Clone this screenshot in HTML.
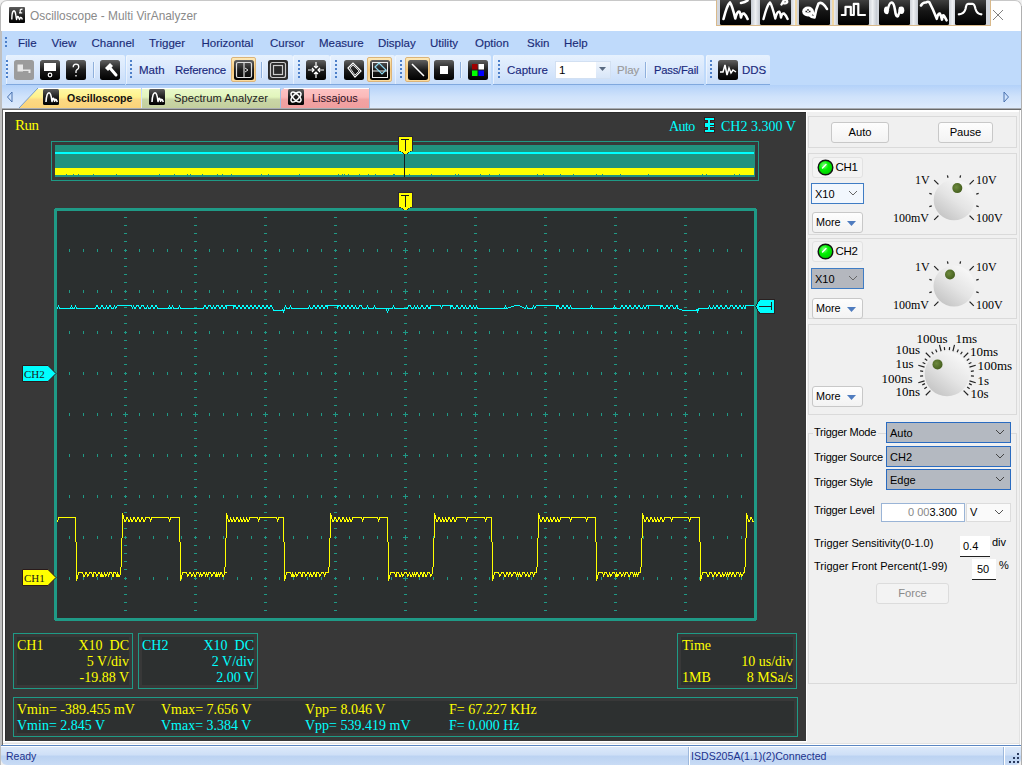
<!DOCTYPE html>
<html><head><meta charset="utf-8">
<style>
*{box-sizing:border-box;margin:0;padding:0}
html,body{width:1022px;height:765px;overflow:hidden;background:#f0f0f0;font-family:"Liberation Sans",sans-serif;position:relative}
.a{position:absolute;white-space:nowrap}
.sf{font-family:"Liberation Serif",serif}
.mi{position:absolute;top:36px;font-size:11.5px;line-height:14px;color:#1a2c78;white-space:nowrap;-webkit-text-stroke:0.15px #1a2c78}
.tg{position:absolute;top:55px;height:30px;background:linear-gradient(#e6f1fe,#d9e8fc 50%,#c8ddf9);border-bottom:1px solid #80a8de;border-radius:2px 2px 0 0;box-shadow:inset 1px 0 0 rgba(255,255,255,0.5)}
.grip{position:absolute;width:3px;background:repeating-linear-gradient(#4d7fc8 0 2px,transparent 2px 4px);-webkit-mask:linear-gradient(90deg,#000 0 2px,transparent 2px)}
.ico{position:absolute;width:20px;height:20px;border-radius:3px;background:linear-gradient(#5a5a5a,#101010 45%,#000)}
.gb{position:absolute;border:1px solid #dadada}
.btn{position:absolute;background:linear-gradient(#fdfdfd,#f3f3f3);border:1px solid #c8c8c8;border-radius:3px;font-size:11.2px;color:#000;text-align:center;white-space:nowrap}
.lab{position:absolute;font-size:11px;line-height:13px;color:#000;white-space:nowrap}
.kl{position:absolute;font-family:"Liberation Serif",serif;font-size:12px;line-height:12px;color:#000;white-space:nowrap}
.cmb{position:absolute;border:1px solid #2a6bc0;background:#b9bec6;font-size:11px;color:#000;white-space:nowrap}
.chev{position:absolute;width:6px;height:6px;border-right:1px solid #555;border-bottom:1px solid #555;transform:rotate(45deg)}
.ttxt{position:absolute;font-size:12px;line-height:14px;white-space:nowrap}
</style></head><body>

<div class="a" style="left:0;top:0;width:1022px;height:31px;background:#fff;border-top-left-radius:7px;border-top-right-radius:7px;border-left:1px solid #b8b8b8;border-top:1px solid #c8c8c8;border-right:1px solid #c8c8c8"></div>
<svg class="a" style="left:9px;top:7px" width="16" height="16" viewBox="0 0 16 16"><defs><linearGradient id="wic" x1="0" y1="0" x2="0" y2="1"><stop offset="0" stop-color="#5c5c5c"/><stop offset="0.55" stop-color="#202020"/><stop offset="1" stop-color="#000"/></linearGradient></defs><rect x="0" y="0" width="16" height="16" rx="1" fill="url(#wic)"/><path d="M2.8 12.5 L3 8 Q3.5 4 5 3.8 Q6.3 4 6.8 8 L7.5 12.5 L8.5 9.5 Q9.5 9 10 11.5 L10.5 12.5 L11.5 10.5 Q12.5 10 13.3 12.5" stroke="#fff" stroke-width="1.4" fill="none" stroke-linejoin="round"/><path d="M10 5.8 H13.2 M11.2 5.5 V3 Q11.5 2.2 13.5 2.2" stroke="#fff" stroke-width="1.2" fill="none"/></svg>
<div class="a" style="left:30px;top:9px;font-size:11.9px;line-height:15px;color:#8a8a8a">Oscilloscope - Multi VirAnalyzer</div>
<div class="a" style="left:716px;top:0;width:275px;height:26px;background:#d2d6dd;border:1px solid #d9b98a;border-top:none"></div>
<div class="a" style="left:751px;top:0;width:9px;height:25px;background:linear-gradient(90deg,#c4c9d1,#eef0f3 50%,#c4c9d1)"></div>
<div class="a" style="left:790px;top:0;width:9px;height:25px;background:linear-gradient(90deg,#c4c9d1,#eef0f3 50%,#c4c9d1)"></div>
<div class="a" style="left:829px;top:0;width:9px;height:25px;background:linear-gradient(90deg,#c4c9d1,#eef0f3 50%,#c4c9d1)"></div>
<div class="a" style="left:868px;top:0;width:9px;height:25px;background:linear-gradient(90deg,#c4c9d1,#eef0f3 50%,#c4c9d1)"></div>
<div class="a" style="left:909px;top:0;width:9px;height:25px;background:linear-gradient(90deg,#c4c9d1,#eef0f3 50%,#c4c9d1)"></div>
<div class="a" style="left:948px;top:0;width:9px;height:25px;background:linear-gradient(90deg,#c4c9d1,#eef0f3 50%,#c4c9d1)"></div>
<div class="a" style="left:795px;top:0;width:39px;height:25px;border-left:2px solid #f0d8a8;border-right:2px solid #f0d8a8"></div>
<svg class="a" style="left:720px;top:0" width="31" height="25" viewBox="0 0 31 25"><defs><linearGradient id="gi720" x1="0" y1="0" x2="0" y2="1"><stop offset="0" stop-color="#4a4a4a"/><stop offset="0.5" stop-color="#161616"/><stop offset="1" stop-color="#000"/></linearGradient></defs><rect x="0" y="-3" width="31" height="28" rx="1.5" fill="url(#gi720)"/><path d="M3.5 19 Q7 5 10 2.5 Q12 5 15.3 18.5 Q17 11 19.4 11.7 Q20.5 13 21 17.5 Q22 13 24 13.5 Q26 15 27.6 19 M21 3 Q25 2.5 27.5 0.5" stroke="#fff" stroke-width="2.6" fill="none" stroke-linecap="round" stroke-linejoin="round"/></svg>
<svg class="a" style="left:760px;top:0" width="31" height="25" viewBox="0 0 31 25"><defs><linearGradient id="gi760" x1="0" y1="0" x2="0" y2="1"><stop offset="0" stop-color="#4a4a4a"/><stop offset="0.5" stop-color="#161616"/><stop offset="1" stop-color="#000"/></linearGradient></defs><rect x="0" y="-3" width="31" height="28" rx="1.5" fill="url(#gi760)"/><path d="M3.5 19 Q7 5 10 2.5 Q12 5 15.3 18.5 Q17 11 19.4 11.7 Q20.5 13 21 17.5 Q22 13 24 13.5 Q26 15 27.6 19 M21.5 4.5 L24 0 M24 0 Q28 0 27 2.5 Q25.5 4 23 3" stroke="#fff" stroke-width="2.4" fill="none" stroke-linecap="round" stroke-linejoin="round"/></svg>
<svg class="a" style="left:799px;top:0" width="31" height="25" viewBox="0 0 31 25"><defs><linearGradient id="gi799" x1="0" y1="0" x2="0" y2="1"><stop offset="0" stop-color="#4a4a4a"/><stop offset="0.5" stop-color="#161616"/><stop offset="1" stop-color="#000"/></linearGradient></defs><rect x="0" y="-3" width="31" height="28" rx="1.5" fill="url(#gi799)"/><ellipse cx="9" cy="11.5" rx="5.8" ry="5" fill="#fff"/><path d="M12 12 Q15 17 17 15 L14 10 Z" fill="#fff"/><path d="M6.5 11.5 H11.5 M9 9 V14" stroke="#222" stroke-width="1.3"/><circle cx="9" cy="11.5" r="1" fill="#fff"/><path d="M15.5 17.5 Q17 9 19.5 3.5 Q22 2 24 4 Q26.5 6 28 9 M9 14 Q12 17 15.5 17.5" stroke="#fff" stroke-width="2.6" fill="none" stroke-linecap="round" stroke-linejoin="round"/></svg>
<svg class="a" style="left:838px;top:0" width="31" height="25" viewBox="0 0 31 25"><defs><linearGradient id="gi838" x1="0" y1="0" x2="0" y2="1"><stop offset="0" stop-color="#4a4a4a"/><stop offset="0.5" stop-color="#161616"/><stop offset="1" stop-color="#000"/></linearGradient></defs><rect x="0" y="-3" width="31" height="28" rx="1.5" fill="url(#gi838)"/><path d="M3.8 15 H7.5 V6.8 H12.8 V15 H15.8 V3.8 H20.3 V15 H27" stroke="#fff" stroke-width="2.2" fill="none" stroke-linecap="round" stroke-linejoin="round"/></svg>
<svg class="a" style="left:879px;top:0" width="31" height="25" viewBox="0 0 31 25"><defs><linearGradient id="gi879" x1="0" y1="0" x2="0" y2="1"><stop offset="0" stop-color="#4a4a4a"/><stop offset="0.5" stop-color="#161616"/><stop offset="1" stop-color="#000"/></linearGradient></defs><rect x="0" y="-3" width="31" height="28" rx="1.5" fill="url(#gi879)"/><ellipse cx="7.5" cy="10.2" rx="2.6" ry="3.8" fill="#fff"/><ellipse cx="22.5" cy="10.2" rx="2.8" ry="3.8" fill="#fff"/><path d="M9 7 L9 13.5" stroke="#111" stroke-width="0.8"/><path d="M8 13 Q10 2 12.8 2.5 Q15 3 16 10 Q17 18 19 16 Q21 12 21 8" stroke="#fff" stroke-width="2.6" fill="none" stroke-linecap="round" stroke-linejoin="round"/></svg>
<svg class="a" style="left:918px;top:0" width="31" height="25" viewBox="0 0 31 25"><defs><linearGradient id="gi918" x1="0" y1="0" x2="0" y2="1"><stop offset="0" stop-color="#4a4a4a"/><stop offset="0.5" stop-color="#161616"/><stop offset="1" stop-color="#000"/></linearGradient></defs><rect x="0" y="-3" width="31" height="28" rx="1.5" fill="url(#gi918)"/><path d="M3 5.5 Q5 2 8 2.5 Q10 1 11.5 2.5 Q15 9 18.8 18.8 Q20 13 21.8 13.6 Q23 15 24 19.6 Q24.5 14 25.8 15.5 Q27.5 18 28.5 20.3" stroke="#fff" stroke-width="2.6" fill="none" stroke-linecap="round" stroke-linejoin="round"/></svg>
<svg class="a" style="left:955px;top:0" width="31" height="25" viewBox="0 0 31 25"><defs><linearGradient id="gi955" x1="0" y1="0" x2="0" y2="1"><stop offset="0" stop-color="#4a4a4a"/><stop offset="0.5" stop-color="#161616"/><stop offset="1" stop-color="#000"/></linearGradient></defs><rect x="0" y="-3" width="31" height="28" rx="1.5" fill="url(#gi955)"/><path d="M3.8 14.3 Q9 14 10.5 9 Q11.3 3.8 13 3.8 H17.5 Q19.5 3.8 20.5 9 Q22 14 26.4 14.3" stroke="#fff" stroke-width="2.2" fill="none" stroke-linecap="round" stroke-linejoin="round"/></svg>
<svg class="a" style="left:992px;top:9px" width="12" height="12"><path d="M1 1 L11 11 M11 1 L1 11" stroke="#808080" stroke-width="1"/></svg>
<div class="a" style="left:0;top:31px;width:1022px;height:24px;background:#bfdafb"></div>
<div class="grip" style="left:5px;top:37px;height:11px"></div>
<div class="mi" style="left:18px">File</div>
<div class="mi" style="left:51.5px">View</div>
<div class="mi" style="left:91.5px">Channel</div>
<div class="mi" style="left:149px">Trigger</div>
<div class="mi" style="left:201.5px">Horizontal</div>
<div class="mi" style="left:270px">Cursor</div>
<div class="mi" style="left:319px">Measure</div>
<div class="mi" style="left:378px">Display</div>
<div class="mi" style="left:430px">Utility</div>
<div class="mi" style="left:475px">Option</div>
<div class="mi" style="left:527px">Skin</div>
<div class="mi" style="left:564px">Help</div>
<div class="a" style="left:0;top:55px;width:1022px;height:30px;background:#bfdafb"></div>
<div class="tg" style="left:6px;width:119px"></div>
<div class="tg" style="left:126px;width:167px"></div>
<div class="tg" style="left:293px;width:37px"></div>
<div class="tg" style="left:330px;width:65px"></div>
<div class="tg" style="left:395px;width:96px"></div>
<div class="tg" style="left:493px;width:211px"></div>
<div class="tg" style="left:706px;width:64px"></div>
<div class="grip" style="left:6px;top:60px;height:18px"></div>
<div class="grip" style="left:130px;top:60px;height:18px"></div>
<div class="grip" style="left:298px;top:60px;height:18px"></div>
<div class="grip" style="left:335px;top:60px;height:18px"></div>
<div class="grip" style="left:400px;top:60px;height:18px"></div>
<div class="grip" style="left:498px;top:60px;height:18px"></div>
<div class="grip" style="left:710px;top:60px;height:18px"></div>
<div class="a" style="left:93px;top:62px;width:1px;height:16px;background:#8fb0dc;box-shadow:1px 0 0 #eef5fd"></div>
<div class="a" style="left:261px;top:62px;width:1px;height:16px;background:#8fb0dc;box-shadow:1px 0 0 #eef5fd"></div>
<div class="a" style="left:460px;top:62px;width:1px;height:16px;background:#8fb0dc;box-shadow:1px 0 0 #eef5fd"></div>
<div class="a" style="left:645px;top:62px;width:1px;height:16px;background:#8fb0dc;box-shadow:1px 0 0 #eef5fd"></div>
<svg class="a" style="left:14px;top:60px" width="20" height="20" viewBox="0 0 20 20"><defs><linearGradient id="gblk" x1="0" y1="0" x2="0" y2="1"><stop offset="0" stop-color="#606060"/><stop offset="0.5" stop-color="#1c1c1c"/><stop offset="1" stop-color="#000"/></linearGradient></defs><rect x="0" y="0" width="20" height="20" rx="2.5" fill="#9c9c9c"/><path d="M3.5 4.5 H9 V9.5 H16.5 V13 H14.5 V11 H9 V11.5 H3.5 Z" fill="#e8e8e8"/></svg>
<svg class="a" style="left:40px;top:60px" width="20" height="20" viewBox="0 0 20 20"><defs><linearGradient id="gblk" x1="0" y1="0" x2="0" y2="1"><stop offset="0" stop-color="#606060"/><stop offset="0.5" stop-color="#1c1c1c"/><stop offset="1" stop-color="#000"/></linearGradient></defs><rect x="0" y="0" width="20" height="20" rx="2.5" fill="url(#gblk)"/><rect x="4" y="3" width="12" height="8" fill="#fff"/><circle cx="10" cy="15" r="1.8" fill="none" stroke="#fff" stroke-width="1.2"/></svg>
<svg class="a" style="left:66px;top:60px" width="20" height="20" viewBox="0 0 20 20"><defs><linearGradient id="gblk" x1="0" y1="0" x2="0" y2="1"><stop offset="0" stop-color="#606060"/><stop offset="0.5" stop-color="#1c1c1c"/><stop offset="1" stop-color="#000"/></linearGradient></defs><rect x="0" y="0" width="20" height="20" rx="2.5" fill="url(#gblk)"/><path d="M7.2 7.2 Q7.2 4.2 10 4.2 Q12.8 4.2 12.8 7 Q12.8 8.8 10.8 9.8 Q10 10.3 10 11.5 V13 M10 15 V16.5" stroke="#fff" stroke-width="1.3" fill="none"/></svg>
<svg class="a" style="left:100px;top:60px" width="20" height="20" viewBox="0 0 20 20"><defs><linearGradient id="gblk" x1="0" y1="0" x2="0" y2="1"><stop offset="0" stop-color="#606060"/><stop offset="0.5" stop-color="#1c1c1c"/><stop offset="1" stop-color="#000"/></linearGradient></defs><rect x="0" y="0" width="20" height="20" rx="2.5" fill="url(#gblk)"/><path d="M5 8 L10 3 L13 6 L8 11 Z" fill="#fff"/><path d="M10 8 L16 15" stroke="#fff" stroke-width="3" stroke-linecap="round"/></svg>
<div class="a" style="left:231px;top:57px;width:25px;height:25px;border:1px solid #dcb478;border-radius:2px;background:linear-gradient(#fde9b8,#f7c97a 50%,#fbdca0)"></div>
<svg class="a" style="left:234px;top:60px" width="20" height="20" viewBox="0 0 20 20"><defs><linearGradient id="gblk" x1="0" y1="0" x2="0" y2="1"><stop offset="0" stop-color="#606060"/><stop offset="0.5" stop-color="#1c1c1c"/><stop offset="1" stop-color="#000"/></linearGradient></defs><rect x="0" y="0" width="20" height="20" rx="2.5" fill="url(#gblk)"/><rect x="2.5" y="2.5" width="15" height="15" rx="1.5" fill="none" stroke="#ddd" stroke-width="1.2"/><path d="M10 2.5 V17.5" stroke="#ddd" stroke-width="1.2"/><path d="M11 8 L14 10 L11 12" fill="none" stroke="#ddd" stroke-width="1"/></svg>
<svg class="a" style="left:268px;top:60px" width="20" height="20" viewBox="0 0 20 20"><defs><linearGradient id="gblk" x1="0" y1="0" x2="0" y2="1"><stop offset="0" stop-color="#606060"/><stop offset="0.5" stop-color="#1c1c1c"/><stop offset="1" stop-color="#000"/></linearGradient></defs><rect x="0" y="0" width="20" height="20" rx="2.5" fill="#2a2a2a"/><rect x="2.5" y="2.5" width="15" height="15" rx="2" fill="none" stroke="#ccc" stroke-width="1.2"/><rect x="5.5" y="5.5" width="9" height="9" fill="none" stroke="#ccc" stroke-width="1.2"/></svg>
<svg class="a" style="left:306px;top:60px" width="20" height="20" viewBox="0 0 20 20"><defs><linearGradient id="gblk" x1="0" y1="0" x2="0" y2="1"><stop offset="0" stop-color="#606060"/><stop offset="0.5" stop-color="#1c1c1c"/><stop offset="1" stop-color="#000"/></linearGradient></defs><rect x="0" y="0" width="20" height="20" rx="2.5" fill="url(#gblk)"/><path d="M10 2 V8 M10 12 V18 M2 10 H8 M12 10 H18 M8 6 L10 8 L12 6 M8 14 L10 12 L12 14 M6 8 L8 10 L6 12 M14 8 L12 10 L14 12" fill="none" stroke="#fff" stroke-width="1.2"/></svg>
<svg class="a" style="left:344px;top:60px" width="20" height="20" viewBox="0 0 20 20"><defs><linearGradient id="gblk" x1="0" y1="0" x2="0" y2="1"><stop offset="0" stop-color="#606060"/><stop offset="0.5" stop-color="#1c1c1c"/><stop offset="1" stop-color="#000"/></linearGradient></defs><rect x="0" y="0" width="20" height="20" rx="2.5" fill="url(#gblk)"/><path d="M4 8 L9 3 L17 11 L11 17 Z" fill="none" stroke="#fff" stroke-width="1.2"/><path d="M6 8 L9 5 L15 11 L11 15 Z" fill="none" stroke="#fff" stroke-width="0.8"/></svg>
<div class="a" style="left:367px;top:57px;width:25px;height:25px;border:1px solid #dcb478;border-radius:2px;background:linear-gradient(#fde9b8,#f7c97a 50%,#fbdca0)"></div>
<svg class="a" style="left:370px;top:60px" width="20" height="20" viewBox="0 0 20 20"><defs><linearGradient id="gblk" x1="0" y1="0" x2="0" y2="1"><stop offset="0" stop-color="#606060"/><stop offset="0.5" stop-color="#1c1c1c"/><stop offset="1" stop-color="#000"/></linearGradient></defs><rect x="0" y="0" width="20" height="20" rx="2.5" fill="url(#gblk)"/><rect x="2.5" y="2.5" width="15" height="15" fill="none" stroke="#eee" stroke-width="1"/><path d="M3 11 H17" stroke="#eee" stroke-width="1"/><path d="M5 7 L9 3 L16 10 L12 14 Z" fill="none" stroke="#8fd8f0" stroke-width="1.2"/></svg>
<div class="a" style="left:405px;top:57px;width:25px;height:25px;border:1px solid #dcb478;border-radius:2px;background:linear-gradient(#fde9b8,#f7c97a 50%,#fbdca0)"></div>
<svg class="a" style="left:408px;top:60px" width="20" height="20" viewBox="0 0 20 20"><defs><linearGradient id="gblk" x1="0" y1="0" x2="0" y2="1"><stop offset="0" stop-color="#606060"/><stop offset="0.5" stop-color="#1c1c1c"/><stop offset="1" stop-color="#000"/></linearGradient></defs><rect x="0" y="0" width="20" height="20" rx="2.5" fill="url(#gblk)"/><path d="M4 4 L16 16" stroke="#fff" stroke-width="1.5"/></svg>
<svg class="a" style="left:434px;top:60px" width="20" height="20" viewBox="0 0 20 20"><defs><linearGradient id="gblk" x1="0" y1="0" x2="0" y2="1"><stop offset="0" stop-color="#606060"/><stop offset="0.5" stop-color="#1c1c1c"/><stop offset="1" stop-color="#000"/></linearGradient></defs><rect x="0" y="0" width="20" height="20" rx="2.5" fill="url(#gblk)"/><rect x="6" y="6" width="8" height="8" fill="#fff"/></svg>
<svg class="a" style="left:468px;top:60px" width="20" height="20" viewBox="0 0 20 20"><defs><linearGradient id="gblk" x1="0" y1="0" x2="0" y2="1"><stop offset="0" stop-color="#606060"/><stop offset="0.5" stop-color="#1c1c1c"/><stop offset="1" stop-color="#000"/></linearGradient></defs><rect x="0" y="0" width="20" height="20" rx="2.5" fill="url(#gblk)"/><rect x="4" y="4" width="5.5" height="5.5" fill="#a00000"/><rect x="10.5" y="4" width="5.5" height="5.5" fill="#fff"/><rect x="4" y="10.5" width="5.5" height="5.5" fill="#00ff00"/><rect x="10.5" y="10.5" width="5.5" height="5.5" fill="#0000ff"/></svg>
<svg class="a" style="left:718px;top:60px" width="20" height="20" viewBox="0 0 20 20"><defs><linearGradient id="gblk" x1="0" y1="0" x2="0" y2="1"><stop offset="0" stop-color="#606060"/><stop offset="0.5" stop-color="#1c1c1c"/><stop offset="1" stop-color="#000"/></linearGradient></defs><rect x="0" y="0" width="20" height="20" rx="2.5" fill="url(#gblk)"/><path d="M2 12 L5 12 L7 5 L9 15 L11 8 L13 13 L15 10 L18 12" fill="none" stroke="#fff" stroke-width="1.5"/></svg>
<div class="a" style="left:139px;top:63px;font-size:11.5px;line-height:14px;color:#1a2a7e;-webkit-text-stroke:0.15px #1a2a7e">Math</div>
<div class="a" style="left:175px;top:63px;font-size:11.5px;line-height:14px;color:#1a2a7e;-webkit-text-stroke:0.15px #1a2a7e;letter-spacing:-0.25px">Reference</div>
<div class="a" style="left:507px;top:63px;font-size:11.5px;line-height:14px;color:#1a2a7e;-webkit-text-stroke:0.15px #1a2a7e">Capture</div>
<div class="a" style="left:617px;top:63px;font-size:11.5px;line-height:14px;color:#9a9a9a;-webkit-text-stroke:0.15px #9a9a9a">Play</div>
<div class="a" style="left:654px;top:63px;font-size:11.2px;line-height:14px;color:#1a2a7e;-webkit-text-stroke:0.15px #1a2a7e;letter-spacing:-0.2px">Pass/Fail</div>
<div class="a" style="left:742px;top:63px;font-size:11.5px;line-height:14px;color:#1a2a7e;-webkit-text-stroke:0.15px #1a2a7e">DDS</div>
<div class="a" style="left:555px;top:61px;width:56px;height:18px;background:#fff;border:1px solid #d2e0f2;font-size:11.5px;line-height:16px;padding-left:3px">1</div>
<div class="a" style="left:596px;top:62px;width:14px;height:16px;background:linear-gradient(#eef4fc,#d8e6f8)"></div>
<svg class="a" style="left:599px;top:67px" width="8" height="5"><path d="M0 0 H7 L3.5 4 Z" fill="#5a6a80"/></svg>
<div class="a" style="left:0;top:85px;width:1022px;height:23px;background:linear-gradient(#b3d1f9,#cfe2fb 50%,#deebfc)"></div>
<svg class="a" style="left:6px;top:91px" width="8" height="12"><path d="M6 1 L1.5 6 L6 11 Z" fill="none" stroke="#4a72b0" stroke-width="1"/></svg>
<svg class="a" style="left:1002px;top:91px" width="8" height="12"><path d="M2 1 L6.5 6 L2 11 Z" fill="none" stroke="#4a72b0" stroke-width="1"/></svg>
<svg class="a" style="left:18px;top:87px" width="355" height="22" viewBox="0 0 355 22"><defs><linearGradient id="ty" x1="0" y1="0" x2="0" y2="1"><stop offset="0" stop-color="#fff9a8"/><stop offset="0.45" stop-color="#fff18c"/><stop offset="0.58" stop-color="#fcd983"/><stop offset="1" stop-color="#fbd37a"/></linearGradient><linearGradient id="tgn" x1="0" y1="0" x2="0" y2="1"><stop offset="0" stop-color="#eaf9cc"/><stop offset="0.45" stop-color="#e2f5bc"/><stop offset="0.58" stop-color="#c9d6a6"/><stop offset="1" stop-color="#c4cf9e"/></linearGradient><linearGradient id="tp" x1="0" y1="0" x2="0" y2="1"><stop offset="0" stop-color="#fdc4c4"/><stop offset="0.45" stop-color="#fbb9b9"/><stop offset="0.58" stop-color="#f1a3a3"/><stop offset="1" stop-color="#f09f9f"/></linearGradient></defs><path d="M124 21 V1 H262 V21 Z" fill="url(#tgn)"/><path d="M263 21 V4 L266 1 H351 V21 Z" fill="url(#tp)"/><path d="M1 21 L20 1 H123 V21 Z" fill="url(#ty)"/><path d="M20 1.5 H123 M124 1.5 H262 M266 1.5 H351" stroke="#fff" stroke-width="1"/><path d="M1 21 L20 1" stroke="#6a94cc" stroke-width="0.9" fill="none"/><path d="M262.5 2 V21 M351.5 1 V21" stroke="#a4c0e2" stroke-width="1"/></svg>
<svg class="a" style="left:43px;top:89px" width="16" height="16" viewBox="0 0 16 16"><defs><linearGradient id="tgi43" x1="0" y1="0" x2="0" y2="1"><stop offset="0" stop-color="#5a5a5a"/><stop offset="0.5" stop-color="#1e1e1e"/><stop offset="1" stop-color="#000"/></linearGradient></defs><rect width="16" height="16" rx="1.5" fill="url(#tgi43)"/><path d="M3 13 Q3.5 4 6 3.8 Q8 3.8 9 12.5 Q9.8 8.5 10.8 9.5 L11.6 12.3 Q12.3 9.5 13.3 10.8 L14.3 13" stroke="#fff" stroke-width="1.6" fill="none" stroke-linejoin="round"/></svg>
<svg class="a" style="left:149px;top:89px" width="16" height="16" viewBox="0 0 16 16"><defs><linearGradient id="tgi149" x1="0" y1="0" x2="0" y2="1"><stop offset="0" stop-color="#5a5a5a"/><stop offset="0.5" stop-color="#1e1e1e"/><stop offset="1" stop-color="#000"/></linearGradient></defs><rect width="16" height="16" rx="1.5" fill="url(#tgi149)"/><path d="M3 13 Q3.5 4 6 3.8 Q8 3.8 9 12.5 Q9.8 8.5 10.8 9.5 L11.6 12.3 Q12.3 9.5 13.3 10.8 L14.3 13" stroke="#fff" stroke-width="1.6" fill="none" stroke-linejoin="round"/></svg>
<svg class="a" style="left:288px;top:89px" width="16" height="16" viewBox="0 0 16 16"><defs><linearGradient id="tgi288" x1="0" y1="0" x2="0" y2="1"><stop offset="0" stop-color="#5a5a5a"/><stop offset="0.5" stop-color="#1e1e1e"/><stop offset="1" stop-color="#000"/></linearGradient></defs><rect width="16" height="16" rx="1.5" fill="url(#tgi288)"/><ellipse cx="8" cy="8" rx="6.3" ry="2.8" transform="rotate(45 8 8)" stroke="#fff" stroke-width="1.5" fill="none"/><ellipse cx="8" cy="8" rx="6.3" ry="2.8" transform="rotate(-45 8 8)" stroke="#fff" stroke-width="1.5" fill="none"/></svg>
<div class="ttxt" style="left:67px;top:91px;font-weight:bold;color:#111;font-size:10.5px">Oscilloscope</div>
<div class="ttxt" style="left:174px;top:91px;color:#222;font-size:11.2px">Spectrum Analyzer</div>
<div class="ttxt" style="left:312px;top:91px;color:#2a0e1e;font-size:11px">Lissajous</div>
<div class="a" style="left:0;top:108px;width:1022px;height:1px;background:#a8acb2"></div>
<div class="a" style="left:0;top:109px;width:1022px;height:1px;background:#6a6a6a"></div>
<div class="a" style="left:0;top:110px;width:1022px;height:635px;background:#f0f0f0"></div>
<div class="a" style="left:0;top:31px;width:2px;height:714px;background:#c0c0c0"></div>
<div class="a" style="left:0;top:745px;width:1px;height:20px;background:#c0c0c0"></div>
<div class="a" style="left:2px;top:109px;width:1px;height:636px;background:#6a6a6a"></div>
<div class="a" style="left:3px;top:110px;width:1016px;height:2px;background:#fff"></div>
<div class="a" style="left:3px;top:110px;width:2px;height:633px;background:#fff"></div>
<div class="a" style="left:3px;top:741px;width:804px;height:1px;background:#fff"></div>
<div class="a" style="left:806px;top:111px;width:1px;height:631px;background:#fff"></div>
<div class="a" style="left:1019px;top:110px;width:1px;height:635px;background:#dadada"></div>
<div class="a" style="left:1019px;top:110px;width:1px;height:635px;background:#e2e2e2"></div>
<div class="a" style="left:1020px;top:110px;width:1px;height:635px;background:#fff"></div>
<div class="a" style="left:1021px;top:6px;width:1px;height:759px;background:#b0b0b0"></div>
<div class="a" style="left:3px;top:743px;width:1016px;height:1px;background:#e2e2e2"></div>
<div class="a" style="left:3px;top:744px;width:1016px;height:1px;background:#fff"></div>
<div class="a" style="left:5px;top:112px;width:801px;height:629px;background:#383838;border-top:1px solid #2c2c2c;border-left:1px solid #2e2e2e"></div>
<div class="a sf" style="left:15px;top:117px;font-size:15px;line-height:16px;color:#ffff00;letter-spacing:-0.5px">Run</div>
<div class="a sf" style="left:669px;top:119px;font-size:14px;line-height:16px;color:#00ffff;letter-spacing:-0.6px">Auto</div>
<svg class="a" style="left:704px;top:117px" width="11" height="16" viewBox="0 0 11 16" shape-rendering="crispEdges"><g fill="#3a1a1a"><rect x="0" y="0" width="11" height="4"/><rect x="0" y="12" width="11" height="4"/><rect x="3" y="0" width="4" height="16"/><rect x="0" y="5" width="11" height="6"/></g><g fill="#00ffff"><rect x="1" y="1" width="9" height="2"/><rect x="1" y="13" width="9" height="2"/><rect x="4" y="1" width="2" height="14"/><rect x="1" y="6" width="9" height="2"/><rect x="1" y="8" width="4" height="2"/><rect x="6" y="9" width="4" height="1"/></g></svg>
<div class="a sf" style="left:721px;top:119px;font-size:14px;line-height:16px;color:#00ffff">CH2 3.300 V</div>
<svg class="a" style="left:0;top:0" width="1022" height="765" viewBox="0 0 1022 765" shape-rendering="crispEdges">
<rect x="51.5" y="141.5" width="707" height="39" fill="none" stroke="#1f9a86" stroke-width="1"/>
<rect x="55" y="145" width="700" height="32" fill="#21927f"/>
<rect x="55" y="152" width="699" height="2" fill="#00ffff"/>
<rect x="55" y="168" width="699" height="7" fill="#ffff00"/>
<rect x="66" y="174" width="1" height="1" fill="#21927f"/>
<rect x="73" y="174" width="1" height="1" fill="#21927f"/>
<rect x="78" y="174" width="1" height="1" fill="#21927f"/>
<rect x="93" y="174" width="1" height="1" fill="#21927f"/>
<rect x="116" y="174" width="1" height="1" fill="#21927f"/>
<rect x="159" y="174" width="1" height="1" fill="#21927f"/>
<rect x="174" y="174" width="1" height="1" fill="#21927f"/>
<rect x="187" y="174" width="1" height="1" fill="#21927f"/>
<rect x="190" y="174" width="1" height="1" fill="#21927f"/>
<rect x="202" y="174" width="1" height="1" fill="#21927f"/>
<rect x="217" y="174" width="1" height="1" fill="#21927f"/>
<rect x="222" y="174" width="1" height="1" fill="#21927f"/>
<rect x="231" y="174" width="1" height="1" fill="#21927f"/>
<rect x="261" y="174" width="1" height="1" fill="#21927f"/>
<rect x="268" y="174" width="1" height="1" fill="#21927f"/>
<rect x="299" y="174" width="1" height="1" fill="#21927f"/>
<rect x="338" y="174" width="1" height="1" fill="#21927f"/>
<rect x="342" y="174" width="1" height="1" fill="#21927f"/>
<rect x="344" y="174" width="1" height="1" fill="#21927f"/>
<rect x="348" y="174" width="1" height="1" fill="#21927f"/>
<rect x="359" y="174" width="1" height="1" fill="#21927f"/>
<rect x="368" y="174" width="1" height="1" fill="#21927f"/>
<rect x="375" y="174" width="1" height="1" fill="#21927f"/>
<rect x="393" y="174" width="1" height="1" fill="#21927f"/>
<rect x="394" y="174" width="1" height="1" fill="#21927f"/>
<rect x="409" y="174" width="1" height="1" fill="#21927f"/>
<rect x="431" y="174" width="1" height="1" fill="#21927f"/>
<rect x="455" y="174" width="1" height="1" fill="#21927f"/>
<rect x="458" y="174" width="1" height="1" fill="#21927f"/>
<rect x="480" y="174" width="1" height="1" fill="#21927f"/>
<rect x="489" y="174" width="1" height="1" fill="#21927f"/>
<rect x="499" y="174" width="1" height="1" fill="#21927f"/>
<rect x="537" y="174" width="1" height="1" fill="#21927f"/>
<rect x="543" y="174" width="1" height="1" fill="#21927f"/>
<rect x="560" y="174" width="1" height="1" fill="#21927f"/>
<rect x="573" y="174" width="1" height="1" fill="#21927f"/>
<rect x="596" y="174" width="1" height="1" fill="#21927f"/>
<rect x="602" y="174" width="1" height="1" fill="#21927f"/>
<rect x="620" y="174" width="1" height="1" fill="#21927f"/>
<rect x="648" y="174" width="1" height="1" fill="#21927f"/>
<rect x="702" y="174" width="1" height="1" fill="#21927f"/>
<rect x="706" y="174" width="1" height="1" fill="#21927f"/>
<rect x="734" y="174" width="1" height="1" fill="#21927f"/>
<rect x="739" y="174" width="1" height="1" fill="#21927f"/>
<rect x="404" y="154" width="1" height="23" fill="#1a1a1a"/>
<rect x="55" y="209" width="700" height="410" fill="#2b2f2f"/>
<rect x="124" y="217" width="3" height="1" fill="#1f9a86"/>
<rect x="124" y="225" width="3" height="1" fill="#1f9a86"/>
<rect x="124" y="233" width="3" height="1" fill="#1f9a86"/>
<rect x="124" y="241" width="3" height="1" fill="#1f9a86"/>
<rect x="124" y="258" width="3" height="1" fill="#1f9a86"/>
<rect x="124" y="266" width="3" height="1" fill="#1f9a86"/>
<rect x="124" y="274" width="3" height="1" fill="#1f9a86"/>
<rect x="124" y="282" width="3" height="1" fill="#1f9a86"/>
<rect x="124" y="299" width="3" height="1" fill="#1f9a86"/>
<rect x="124" y="307" width="3" height="1" fill="#1f9a86"/>
<rect x="124" y="315" width="3" height="1" fill="#1f9a86"/>
<rect x="124" y="323" width="3" height="1" fill="#1f9a86"/>
<rect x="124" y="340" width="3" height="1" fill="#1f9a86"/>
<rect x="124" y="348" width="3" height="1" fill="#1f9a86"/>
<rect x="124" y="356" width="3" height="1" fill="#1f9a86"/>
<rect x="124" y="364" width="3" height="1" fill="#1f9a86"/>
<rect x="124" y="381" width="3" height="1" fill="#1f9a86"/>
<rect x="124" y="389" width="3" height="1" fill="#1f9a86"/>
<rect x="124" y="397" width="3" height="1" fill="#1f9a86"/>
<rect x="124" y="405" width="3" height="1" fill="#1f9a86"/>
<rect x="124" y="422" width="3" height="1" fill="#1f9a86"/>
<rect x="124" y="430" width="3" height="1" fill="#1f9a86"/>
<rect x="124" y="438" width="3" height="1" fill="#1f9a86"/>
<rect x="124" y="446" width="3" height="1" fill="#1f9a86"/>
<rect x="124" y="463" width="3" height="1" fill="#1f9a86"/>
<rect x="124" y="471" width="3" height="1" fill="#1f9a86"/>
<rect x="124" y="479" width="3" height="1" fill="#1f9a86"/>
<rect x="124" y="487" width="3" height="1" fill="#1f9a86"/>
<rect x="124" y="504" width="3" height="1" fill="#1f9a86"/>
<rect x="124" y="512" width="3" height="1" fill="#1f9a86"/>
<rect x="124" y="520" width="3" height="1" fill="#1f9a86"/>
<rect x="124" y="528" width="3" height="1" fill="#1f9a86"/>
<rect x="124" y="545" width="3" height="1" fill="#1f9a86"/>
<rect x="124" y="553" width="3" height="1" fill="#1f9a86"/>
<rect x="124" y="561" width="3" height="1" fill="#1f9a86"/>
<rect x="124" y="569" width="3" height="1" fill="#1f9a86"/>
<rect x="124" y="586" width="3" height="1" fill="#1f9a86"/>
<rect x="124" y="594" width="3" height="1" fill="#1f9a86"/>
<rect x="124" y="602" width="3" height="1" fill="#1f9a86"/>
<rect x="124" y="610" width="3" height="1" fill="#1f9a86"/>
<rect x="194" y="217" width="3" height="1" fill="#1f9a86"/>
<rect x="194" y="225" width="3" height="1" fill="#1f9a86"/>
<rect x="194" y="233" width="3" height="1" fill="#1f9a86"/>
<rect x="194" y="241" width="3" height="1" fill="#1f9a86"/>
<rect x="194" y="258" width="3" height="1" fill="#1f9a86"/>
<rect x="194" y="266" width="3" height="1" fill="#1f9a86"/>
<rect x="194" y="274" width="3" height="1" fill="#1f9a86"/>
<rect x="194" y="282" width="3" height="1" fill="#1f9a86"/>
<rect x="194" y="299" width="3" height="1" fill="#1f9a86"/>
<rect x="194" y="307" width="3" height="1" fill="#1f9a86"/>
<rect x="194" y="315" width="3" height="1" fill="#1f9a86"/>
<rect x="194" y="323" width="3" height="1" fill="#1f9a86"/>
<rect x="194" y="340" width="3" height="1" fill="#1f9a86"/>
<rect x="194" y="348" width="3" height="1" fill="#1f9a86"/>
<rect x="194" y="356" width="3" height="1" fill="#1f9a86"/>
<rect x="194" y="364" width="3" height="1" fill="#1f9a86"/>
<rect x="194" y="381" width="3" height="1" fill="#1f9a86"/>
<rect x="194" y="389" width="3" height="1" fill="#1f9a86"/>
<rect x="194" y="397" width="3" height="1" fill="#1f9a86"/>
<rect x="194" y="405" width="3" height="1" fill="#1f9a86"/>
<rect x="194" y="422" width="3" height="1" fill="#1f9a86"/>
<rect x="194" y="430" width="3" height="1" fill="#1f9a86"/>
<rect x="194" y="438" width="3" height="1" fill="#1f9a86"/>
<rect x="194" y="446" width="3" height="1" fill="#1f9a86"/>
<rect x="194" y="463" width="3" height="1" fill="#1f9a86"/>
<rect x="194" y="471" width="3" height="1" fill="#1f9a86"/>
<rect x="194" y="479" width="3" height="1" fill="#1f9a86"/>
<rect x="194" y="487" width="3" height="1" fill="#1f9a86"/>
<rect x="194" y="504" width="3" height="1" fill="#1f9a86"/>
<rect x="194" y="512" width="3" height="1" fill="#1f9a86"/>
<rect x="194" y="520" width="3" height="1" fill="#1f9a86"/>
<rect x="194" y="528" width="3" height="1" fill="#1f9a86"/>
<rect x="194" y="545" width="3" height="1" fill="#1f9a86"/>
<rect x="194" y="553" width="3" height="1" fill="#1f9a86"/>
<rect x="194" y="561" width="3" height="1" fill="#1f9a86"/>
<rect x="194" y="569" width="3" height="1" fill="#1f9a86"/>
<rect x="194" y="586" width="3" height="1" fill="#1f9a86"/>
<rect x="194" y="594" width="3" height="1" fill="#1f9a86"/>
<rect x="194" y="602" width="3" height="1" fill="#1f9a86"/>
<rect x="194" y="610" width="3" height="1" fill="#1f9a86"/>
<rect x="264" y="217" width="3" height="1" fill="#1f9a86"/>
<rect x="264" y="225" width="3" height="1" fill="#1f9a86"/>
<rect x="264" y="233" width="3" height="1" fill="#1f9a86"/>
<rect x="264" y="241" width="3" height="1" fill="#1f9a86"/>
<rect x="264" y="258" width="3" height="1" fill="#1f9a86"/>
<rect x="264" y="266" width="3" height="1" fill="#1f9a86"/>
<rect x="264" y="274" width="3" height="1" fill="#1f9a86"/>
<rect x="264" y="282" width="3" height="1" fill="#1f9a86"/>
<rect x="264" y="299" width="3" height="1" fill="#1f9a86"/>
<rect x="264" y="307" width="3" height="1" fill="#1f9a86"/>
<rect x="264" y="315" width="3" height="1" fill="#1f9a86"/>
<rect x="264" y="323" width="3" height="1" fill="#1f9a86"/>
<rect x="264" y="340" width="3" height="1" fill="#1f9a86"/>
<rect x="264" y="348" width="3" height="1" fill="#1f9a86"/>
<rect x="264" y="356" width="3" height="1" fill="#1f9a86"/>
<rect x="264" y="364" width="3" height="1" fill="#1f9a86"/>
<rect x="264" y="381" width="3" height="1" fill="#1f9a86"/>
<rect x="264" y="389" width="3" height="1" fill="#1f9a86"/>
<rect x="264" y="397" width="3" height="1" fill="#1f9a86"/>
<rect x="264" y="405" width="3" height="1" fill="#1f9a86"/>
<rect x="264" y="422" width="3" height="1" fill="#1f9a86"/>
<rect x="264" y="430" width="3" height="1" fill="#1f9a86"/>
<rect x="264" y="438" width="3" height="1" fill="#1f9a86"/>
<rect x="264" y="446" width="3" height="1" fill="#1f9a86"/>
<rect x="264" y="463" width="3" height="1" fill="#1f9a86"/>
<rect x="264" y="471" width="3" height="1" fill="#1f9a86"/>
<rect x="264" y="479" width="3" height="1" fill="#1f9a86"/>
<rect x="264" y="487" width="3" height="1" fill="#1f9a86"/>
<rect x="264" y="504" width="3" height="1" fill="#1f9a86"/>
<rect x="264" y="512" width="3" height="1" fill="#1f9a86"/>
<rect x="264" y="520" width="3" height="1" fill="#1f9a86"/>
<rect x="264" y="528" width="3" height="1" fill="#1f9a86"/>
<rect x="264" y="545" width="3" height="1" fill="#1f9a86"/>
<rect x="264" y="553" width="3" height="1" fill="#1f9a86"/>
<rect x="264" y="561" width="3" height="1" fill="#1f9a86"/>
<rect x="264" y="569" width="3" height="1" fill="#1f9a86"/>
<rect x="264" y="586" width="3" height="1" fill="#1f9a86"/>
<rect x="264" y="594" width="3" height="1" fill="#1f9a86"/>
<rect x="264" y="602" width="3" height="1" fill="#1f9a86"/>
<rect x="264" y="610" width="3" height="1" fill="#1f9a86"/>
<rect x="334" y="217" width="3" height="1" fill="#1f9a86"/>
<rect x="334" y="225" width="3" height="1" fill="#1f9a86"/>
<rect x="334" y="233" width="3" height="1" fill="#1f9a86"/>
<rect x="334" y="241" width="3" height="1" fill="#1f9a86"/>
<rect x="334" y="258" width="3" height="1" fill="#1f9a86"/>
<rect x="334" y="266" width="3" height="1" fill="#1f9a86"/>
<rect x="334" y="274" width="3" height="1" fill="#1f9a86"/>
<rect x="334" y="282" width="3" height="1" fill="#1f9a86"/>
<rect x="334" y="299" width="3" height="1" fill="#1f9a86"/>
<rect x="334" y="307" width="3" height="1" fill="#1f9a86"/>
<rect x="334" y="315" width="3" height="1" fill="#1f9a86"/>
<rect x="334" y="323" width="3" height="1" fill="#1f9a86"/>
<rect x="334" y="340" width="3" height="1" fill="#1f9a86"/>
<rect x="334" y="348" width="3" height="1" fill="#1f9a86"/>
<rect x="334" y="356" width="3" height="1" fill="#1f9a86"/>
<rect x="334" y="364" width="3" height="1" fill="#1f9a86"/>
<rect x="334" y="381" width="3" height="1" fill="#1f9a86"/>
<rect x="334" y="389" width="3" height="1" fill="#1f9a86"/>
<rect x="334" y="397" width="3" height="1" fill="#1f9a86"/>
<rect x="334" y="405" width="3" height="1" fill="#1f9a86"/>
<rect x="334" y="422" width="3" height="1" fill="#1f9a86"/>
<rect x="334" y="430" width="3" height="1" fill="#1f9a86"/>
<rect x="334" y="438" width="3" height="1" fill="#1f9a86"/>
<rect x="334" y="446" width="3" height="1" fill="#1f9a86"/>
<rect x="334" y="463" width="3" height="1" fill="#1f9a86"/>
<rect x="334" y="471" width="3" height="1" fill="#1f9a86"/>
<rect x="334" y="479" width="3" height="1" fill="#1f9a86"/>
<rect x="334" y="487" width="3" height="1" fill="#1f9a86"/>
<rect x="334" y="504" width="3" height="1" fill="#1f9a86"/>
<rect x="334" y="512" width="3" height="1" fill="#1f9a86"/>
<rect x="334" y="520" width="3" height="1" fill="#1f9a86"/>
<rect x="334" y="528" width="3" height="1" fill="#1f9a86"/>
<rect x="334" y="545" width="3" height="1" fill="#1f9a86"/>
<rect x="334" y="553" width="3" height="1" fill="#1f9a86"/>
<rect x="334" y="561" width="3" height="1" fill="#1f9a86"/>
<rect x="334" y="569" width="3" height="1" fill="#1f9a86"/>
<rect x="334" y="586" width="3" height="1" fill="#1f9a86"/>
<rect x="334" y="594" width="3" height="1" fill="#1f9a86"/>
<rect x="334" y="602" width="3" height="1" fill="#1f9a86"/>
<rect x="334" y="610" width="3" height="1" fill="#1f9a86"/>
<rect x="404" y="217" width="3" height="1" fill="#1f9a86"/>
<rect x="404" y="225" width="3" height="1" fill="#1f9a86"/>
<rect x="404" y="233" width="3" height="1" fill="#1f9a86"/>
<rect x="404" y="241" width="3" height="1" fill="#1f9a86"/>
<rect x="404" y="258" width="3" height="1" fill="#1f9a86"/>
<rect x="404" y="266" width="3" height="1" fill="#1f9a86"/>
<rect x="404" y="274" width="3" height="1" fill="#1f9a86"/>
<rect x="404" y="282" width="3" height="1" fill="#1f9a86"/>
<rect x="404" y="299" width="3" height="1" fill="#1f9a86"/>
<rect x="404" y="307" width="3" height="1" fill="#1f9a86"/>
<rect x="404" y="315" width="3" height="1" fill="#1f9a86"/>
<rect x="404" y="323" width="3" height="1" fill="#1f9a86"/>
<rect x="404" y="340" width="3" height="1" fill="#1f9a86"/>
<rect x="404" y="348" width="3" height="1" fill="#1f9a86"/>
<rect x="404" y="356" width="3" height="1" fill="#1f9a86"/>
<rect x="404" y="364" width="3" height="1" fill="#1f9a86"/>
<rect x="404" y="381" width="3" height="1" fill="#1f9a86"/>
<rect x="404" y="389" width="3" height="1" fill="#1f9a86"/>
<rect x="404" y="397" width="3" height="1" fill="#1f9a86"/>
<rect x="404" y="405" width="3" height="1" fill="#1f9a86"/>
<rect x="404" y="422" width="3" height="1" fill="#1f9a86"/>
<rect x="404" y="430" width="3" height="1" fill="#1f9a86"/>
<rect x="404" y="438" width="3" height="1" fill="#1f9a86"/>
<rect x="404" y="446" width="3" height="1" fill="#1f9a86"/>
<rect x="404" y="463" width="3" height="1" fill="#1f9a86"/>
<rect x="404" y="471" width="3" height="1" fill="#1f9a86"/>
<rect x="404" y="479" width="3" height="1" fill="#1f9a86"/>
<rect x="404" y="487" width="3" height="1" fill="#1f9a86"/>
<rect x="404" y="504" width="3" height="1" fill="#1f9a86"/>
<rect x="404" y="512" width="3" height="1" fill="#1f9a86"/>
<rect x="404" y="520" width="3" height="1" fill="#1f9a86"/>
<rect x="404" y="528" width="3" height="1" fill="#1f9a86"/>
<rect x="404" y="545" width="3" height="1" fill="#1f9a86"/>
<rect x="404" y="553" width="3" height="1" fill="#1f9a86"/>
<rect x="404" y="561" width="3" height="1" fill="#1f9a86"/>
<rect x="404" y="569" width="3" height="1" fill="#1f9a86"/>
<rect x="404" y="586" width="3" height="1" fill="#1f9a86"/>
<rect x="404" y="594" width="3" height="1" fill="#1f9a86"/>
<rect x="404" y="602" width="3" height="1" fill="#1f9a86"/>
<rect x="404" y="610" width="3" height="1" fill="#1f9a86"/>
<rect x="474" y="217" width="3" height="1" fill="#1f9a86"/>
<rect x="474" y="225" width="3" height="1" fill="#1f9a86"/>
<rect x="474" y="233" width="3" height="1" fill="#1f9a86"/>
<rect x="474" y="241" width="3" height="1" fill="#1f9a86"/>
<rect x="474" y="258" width="3" height="1" fill="#1f9a86"/>
<rect x="474" y="266" width="3" height="1" fill="#1f9a86"/>
<rect x="474" y="274" width="3" height="1" fill="#1f9a86"/>
<rect x="474" y="282" width="3" height="1" fill="#1f9a86"/>
<rect x="474" y="299" width="3" height="1" fill="#1f9a86"/>
<rect x="474" y="307" width="3" height="1" fill="#1f9a86"/>
<rect x="474" y="315" width="3" height="1" fill="#1f9a86"/>
<rect x="474" y="323" width="3" height="1" fill="#1f9a86"/>
<rect x="474" y="340" width="3" height="1" fill="#1f9a86"/>
<rect x="474" y="348" width="3" height="1" fill="#1f9a86"/>
<rect x="474" y="356" width="3" height="1" fill="#1f9a86"/>
<rect x="474" y="364" width="3" height="1" fill="#1f9a86"/>
<rect x="474" y="381" width="3" height="1" fill="#1f9a86"/>
<rect x="474" y="389" width="3" height="1" fill="#1f9a86"/>
<rect x="474" y="397" width="3" height="1" fill="#1f9a86"/>
<rect x="474" y="405" width="3" height="1" fill="#1f9a86"/>
<rect x="474" y="422" width="3" height="1" fill="#1f9a86"/>
<rect x="474" y="430" width="3" height="1" fill="#1f9a86"/>
<rect x="474" y="438" width="3" height="1" fill="#1f9a86"/>
<rect x="474" y="446" width="3" height="1" fill="#1f9a86"/>
<rect x="474" y="463" width="3" height="1" fill="#1f9a86"/>
<rect x="474" y="471" width="3" height="1" fill="#1f9a86"/>
<rect x="474" y="479" width="3" height="1" fill="#1f9a86"/>
<rect x="474" y="487" width="3" height="1" fill="#1f9a86"/>
<rect x="474" y="504" width="3" height="1" fill="#1f9a86"/>
<rect x="474" y="512" width="3" height="1" fill="#1f9a86"/>
<rect x="474" y="520" width="3" height="1" fill="#1f9a86"/>
<rect x="474" y="528" width="3" height="1" fill="#1f9a86"/>
<rect x="474" y="545" width="3" height="1" fill="#1f9a86"/>
<rect x="474" y="553" width="3" height="1" fill="#1f9a86"/>
<rect x="474" y="561" width="3" height="1" fill="#1f9a86"/>
<rect x="474" y="569" width="3" height="1" fill="#1f9a86"/>
<rect x="474" y="586" width="3" height="1" fill="#1f9a86"/>
<rect x="474" y="594" width="3" height="1" fill="#1f9a86"/>
<rect x="474" y="602" width="3" height="1" fill="#1f9a86"/>
<rect x="474" y="610" width="3" height="1" fill="#1f9a86"/>
<rect x="544" y="217" width="3" height="1" fill="#1f9a86"/>
<rect x="544" y="225" width="3" height="1" fill="#1f9a86"/>
<rect x="544" y="233" width="3" height="1" fill="#1f9a86"/>
<rect x="544" y="241" width="3" height="1" fill="#1f9a86"/>
<rect x="544" y="258" width="3" height="1" fill="#1f9a86"/>
<rect x="544" y="266" width="3" height="1" fill="#1f9a86"/>
<rect x="544" y="274" width="3" height="1" fill="#1f9a86"/>
<rect x="544" y="282" width="3" height="1" fill="#1f9a86"/>
<rect x="544" y="299" width="3" height="1" fill="#1f9a86"/>
<rect x="544" y="307" width="3" height="1" fill="#1f9a86"/>
<rect x="544" y="315" width="3" height="1" fill="#1f9a86"/>
<rect x="544" y="323" width="3" height="1" fill="#1f9a86"/>
<rect x="544" y="340" width="3" height="1" fill="#1f9a86"/>
<rect x="544" y="348" width="3" height="1" fill="#1f9a86"/>
<rect x="544" y="356" width="3" height="1" fill="#1f9a86"/>
<rect x="544" y="364" width="3" height="1" fill="#1f9a86"/>
<rect x="544" y="381" width="3" height="1" fill="#1f9a86"/>
<rect x="544" y="389" width="3" height="1" fill="#1f9a86"/>
<rect x="544" y="397" width="3" height="1" fill="#1f9a86"/>
<rect x="544" y="405" width="3" height="1" fill="#1f9a86"/>
<rect x="544" y="422" width="3" height="1" fill="#1f9a86"/>
<rect x="544" y="430" width="3" height="1" fill="#1f9a86"/>
<rect x="544" y="438" width="3" height="1" fill="#1f9a86"/>
<rect x="544" y="446" width="3" height="1" fill="#1f9a86"/>
<rect x="544" y="463" width="3" height="1" fill="#1f9a86"/>
<rect x="544" y="471" width="3" height="1" fill="#1f9a86"/>
<rect x="544" y="479" width="3" height="1" fill="#1f9a86"/>
<rect x="544" y="487" width="3" height="1" fill="#1f9a86"/>
<rect x="544" y="504" width="3" height="1" fill="#1f9a86"/>
<rect x="544" y="512" width="3" height="1" fill="#1f9a86"/>
<rect x="544" y="520" width="3" height="1" fill="#1f9a86"/>
<rect x="544" y="528" width="3" height="1" fill="#1f9a86"/>
<rect x="544" y="545" width="3" height="1" fill="#1f9a86"/>
<rect x="544" y="553" width="3" height="1" fill="#1f9a86"/>
<rect x="544" y="561" width="3" height="1" fill="#1f9a86"/>
<rect x="544" y="569" width="3" height="1" fill="#1f9a86"/>
<rect x="544" y="586" width="3" height="1" fill="#1f9a86"/>
<rect x="544" y="594" width="3" height="1" fill="#1f9a86"/>
<rect x="544" y="602" width="3" height="1" fill="#1f9a86"/>
<rect x="544" y="610" width="3" height="1" fill="#1f9a86"/>
<rect x="614" y="217" width="3" height="1" fill="#1f9a86"/>
<rect x="614" y="225" width="3" height="1" fill="#1f9a86"/>
<rect x="614" y="233" width="3" height="1" fill="#1f9a86"/>
<rect x="614" y="241" width="3" height="1" fill="#1f9a86"/>
<rect x="614" y="258" width="3" height="1" fill="#1f9a86"/>
<rect x="614" y="266" width="3" height="1" fill="#1f9a86"/>
<rect x="614" y="274" width="3" height="1" fill="#1f9a86"/>
<rect x="614" y="282" width="3" height="1" fill="#1f9a86"/>
<rect x="614" y="299" width="3" height="1" fill="#1f9a86"/>
<rect x="614" y="307" width="3" height="1" fill="#1f9a86"/>
<rect x="614" y="315" width="3" height="1" fill="#1f9a86"/>
<rect x="614" y="323" width="3" height="1" fill="#1f9a86"/>
<rect x="614" y="340" width="3" height="1" fill="#1f9a86"/>
<rect x="614" y="348" width="3" height="1" fill="#1f9a86"/>
<rect x="614" y="356" width="3" height="1" fill="#1f9a86"/>
<rect x="614" y="364" width="3" height="1" fill="#1f9a86"/>
<rect x="614" y="381" width="3" height="1" fill="#1f9a86"/>
<rect x="614" y="389" width="3" height="1" fill="#1f9a86"/>
<rect x="614" y="397" width="3" height="1" fill="#1f9a86"/>
<rect x="614" y="405" width="3" height="1" fill="#1f9a86"/>
<rect x="614" y="422" width="3" height="1" fill="#1f9a86"/>
<rect x="614" y="430" width="3" height="1" fill="#1f9a86"/>
<rect x="614" y="438" width="3" height="1" fill="#1f9a86"/>
<rect x="614" y="446" width="3" height="1" fill="#1f9a86"/>
<rect x="614" y="463" width="3" height="1" fill="#1f9a86"/>
<rect x="614" y="471" width="3" height="1" fill="#1f9a86"/>
<rect x="614" y="479" width="3" height="1" fill="#1f9a86"/>
<rect x="614" y="487" width="3" height="1" fill="#1f9a86"/>
<rect x="614" y="504" width="3" height="1" fill="#1f9a86"/>
<rect x="614" y="512" width="3" height="1" fill="#1f9a86"/>
<rect x="614" y="520" width="3" height="1" fill="#1f9a86"/>
<rect x="614" y="528" width="3" height="1" fill="#1f9a86"/>
<rect x="614" y="545" width="3" height="1" fill="#1f9a86"/>
<rect x="614" y="553" width="3" height="1" fill="#1f9a86"/>
<rect x="614" y="561" width="3" height="1" fill="#1f9a86"/>
<rect x="614" y="569" width="3" height="1" fill="#1f9a86"/>
<rect x="614" y="586" width="3" height="1" fill="#1f9a86"/>
<rect x="614" y="594" width="3" height="1" fill="#1f9a86"/>
<rect x="614" y="602" width="3" height="1" fill="#1f9a86"/>
<rect x="614" y="610" width="3" height="1" fill="#1f9a86"/>
<rect x="684" y="217" width="3" height="1" fill="#1f9a86"/>
<rect x="684" y="225" width="3" height="1" fill="#1f9a86"/>
<rect x="684" y="233" width="3" height="1" fill="#1f9a86"/>
<rect x="684" y="241" width="3" height="1" fill="#1f9a86"/>
<rect x="684" y="258" width="3" height="1" fill="#1f9a86"/>
<rect x="684" y="266" width="3" height="1" fill="#1f9a86"/>
<rect x="684" y="274" width="3" height="1" fill="#1f9a86"/>
<rect x="684" y="282" width="3" height="1" fill="#1f9a86"/>
<rect x="684" y="299" width="3" height="1" fill="#1f9a86"/>
<rect x="684" y="307" width="3" height="1" fill="#1f9a86"/>
<rect x="684" y="315" width="3" height="1" fill="#1f9a86"/>
<rect x="684" y="323" width="3" height="1" fill="#1f9a86"/>
<rect x="684" y="340" width="3" height="1" fill="#1f9a86"/>
<rect x="684" y="348" width="3" height="1" fill="#1f9a86"/>
<rect x="684" y="356" width="3" height="1" fill="#1f9a86"/>
<rect x="684" y="364" width="3" height="1" fill="#1f9a86"/>
<rect x="684" y="381" width="3" height="1" fill="#1f9a86"/>
<rect x="684" y="389" width="3" height="1" fill="#1f9a86"/>
<rect x="684" y="397" width="3" height="1" fill="#1f9a86"/>
<rect x="684" y="405" width="3" height="1" fill="#1f9a86"/>
<rect x="684" y="422" width="3" height="1" fill="#1f9a86"/>
<rect x="684" y="430" width="3" height="1" fill="#1f9a86"/>
<rect x="684" y="438" width="3" height="1" fill="#1f9a86"/>
<rect x="684" y="446" width="3" height="1" fill="#1f9a86"/>
<rect x="684" y="463" width="3" height="1" fill="#1f9a86"/>
<rect x="684" y="471" width="3" height="1" fill="#1f9a86"/>
<rect x="684" y="479" width="3" height="1" fill="#1f9a86"/>
<rect x="684" y="487" width="3" height="1" fill="#1f9a86"/>
<rect x="684" y="504" width="3" height="1" fill="#1f9a86"/>
<rect x="684" y="512" width="3" height="1" fill="#1f9a86"/>
<rect x="684" y="520" width="3" height="1" fill="#1f9a86"/>
<rect x="684" y="528" width="3" height="1" fill="#1f9a86"/>
<rect x="684" y="545" width="3" height="1" fill="#1f9a86"/>
<rect x="684" y="553" width="3" height="1" fill="#1f9a86"/>
<rect x="684" y="561" width="3" height="1" fill="#1f9a86"/>
<rect x="684" y="569" width="3" height="1" fill="#1f9a86"/>
<rect x="684" y="586" width="3" height="1" fill="#1f9a86"/>
<rect x="684" y="594" width="3" height="1" fill="#1f9a86"/>
<rect x="684" y="602" width="3" height="1" fill="#1f9a86"/>
<rect x="684" y="610" width="3" height="1" fill="#1f9a86"/>
<rect x="69" y="249" width="1" height="3" fill="#1f9a86"/>
<rect x="83" y="249" width="1" height="3" fill="#1f9a86"/>
<rect x="97" y="249" width="1" height="3" fill="#1f9a86"/>
<rect x="111" y="249" width="1" height="3" fill="#1f9a86"/>
<rect x="139" y="249" width="1" height="3" fill="#1f9a86"/>
<rect x="153" y="249" width="1" height="3" fill="#1f9a86"/>
<rect x="167" y="249" width="1" height="3" fill="#1f9a86"/>
<rect x="181" y="249" width="1" height="3" fill="#1f9a86"/>
<rect x="209" y="249" width="1" height="3" fill="#1f9a86"/>
<rect x="223" y="249" width="1" height="3" fill="#1f9a86"/>
<rect x="237" y="249" width="1" height="3" fill="#1f9a86"/>
<rect x="251" y="249" width="1" height="3" fill="#1f9a86"/>
<rect x="279" y="249" width="1" height="3" fill="#1f9a86"/>
<rect x="293" y="249" width="1" height="3" fill="#1f9a86"/>
<rect x="307" y="249" width="1" height="3" fill="#1f9a86"/>
<rect x="321" y="249" width="1" height="3" fill="#1f9a86"/>
<rect x="349" y="249" width="1" height="3" fill="#1f9a86"/>
<rect x="363" y="249" width="1" height="3" fill="#1f9a86"/>
<rect x="377" y="249" width="1" height="3" fill="#1f9a86"/>
<rect x="391" y="249" width="1" height="3" fill="#1f9a86"/>
<rect x="419" y="249" width="1" height="3" fill="#1f9a86"/>
<rect x="433" y="249" width="1" height="3" fill="#1f9a86"/>
<rect x="447" y="249" width="1" height="3" fill="#1f9a86"/>
<rect x="461" y="249" width="1" height="3" fill="#1f9a86"/>
<rect x="489" y="249" width="1" height="3" fill="#1f9a86"/>
<rect x="503" y="249" width="1" height="3" fill="#1f9a86"/>
<rect x="517" y="249" width="1" height="3" fill="#1f9a86"/>
<rect x="531" y="249" width="1" height="3" fill="#1f9a86"/>
<rect x="559" y="249" width="1" height="3" fill="#1f9a86"/>
<rect x="573" y="249" width="1" height="3" fill="#1f9a86"/>
<rect x="587" y="249" width="1" height="3" fill="#1f9a86"/>
<rect x="601" y="249" width="1" height="3" fill="#1f9a86"/>
<rect x="629" y="249" width="1" height="3" fill="#1f9a86"/>
<rect x="643" y="249" width="1" height="3" fill="#1f9a86"/>
<rect x="657" y="249" width="1" height="3" fill="#1f9a86"/>
<rect x="671" y="249" width="1" height="3" fill="#1f9a86"/>
<rect x="699" y="249" width="1" height="3" fill="#1f9a86"/>
<rect x="713" y="249" width="1" height="3" fill="#1f9a86"/>
<rect x="727" y="249" width="1" height="3" fill="#1f9a86"/>
<rect x="741" y="249" width="1" height="3" fill="#1f9a86"/>
<rect x="69" y="290" width="1" height="3" fill="#1f9a86"/>
<rect x="83" y="290" width="1" height="3" fill="#1f9a86"/>
<rect x="97" y="290" width="1" height="3" fill="#1f9a86"/>
<rect x="111" y="290" width="1" height="3" fill="#1f9a86"/>
<rect x="139" y="290" width="1" height="3" fill="#1f9a86"/>
<rect x="153" y="290" width="1" height="3" fill="#1f9a86"/>
<rect x="167" y="290" width="1" height="3" fill="#1f9a86"/>
<rect x="181" y="290" width="1" height="3" fill="#1f9a86"/>
<rect x="209" y="290" width="1" height="3" fill="#1f9a86"/>
<rect x="223" y="290" width="1" height="3" fill="#1f9a86"/>
<rect x="237" y="290" width="1" height="3" fill="#1f9a86"/>
<rect x="251" y="290" width="1" height="3" fill="#1f9a86"/>
<rect x="279" y="290" width="1" height="3" fill="#1f9a86"/>
<rect x="293" y="290" width="1" height="3" fill="#1f9a86"/>
<rect x="307" y="290" width="1" height="3" fill="#1f9a86"/>
<rect x="321" y="290" width="1" height="3" fill="#1f9a86"/>
<rect x="349" y="290" width="1" height="3" fill="#1f9a86"/>
<rect x="363" y="290" width="1" height="3" fill="#1f9a86"/>
<rect x="377" y="290" width="1" height="3" fill="#1f9a86"/>
<rect x="391" y="290" width="1" height="3" fill="#1f9a86"/>
<rect x="419" y="290" width="1" height="3" fill="#1f9a86"/>
<rect x="433" y="290" width="1" height="3" fill="#1f9a86"/>
<rect x="447" y="290" width="1" height="3" fill="#1f9a86"/>
<rect x="461" y="290" width="1" height="3" fill="#1f9a86"/>
<rect x="489" y="290" width="1" height="3" fill="#1f9a86"/>
<rect x="503" y="290" width="1" height="3" fill="#1f9a86"/>
<rect x="517" y="290" width="1" height="3" fill="#1f9a86"/>
<rect x="531" y="290" width="1" height="3" fill="#1f9a86"/>
<rect x="559" y="290" width="1" height="3" fill="#1f9a86"/>
<rect x="573" y="290" width="1" height="3" fill="#1f9a86"/>
<rect x="587" y="290" width="1" height="3" fill="#1f9a86"/>
<rect x="601" y="290" width="1" height="3" fill="#1f9a86"/>
<rect x="629" y="290" width="1" height="3" fill="#1f9a86"/>
<rect x="643" y="290" width="1" height="3" fill="#1f9a86"/>
<rect x="657" y="290" width="1" height="3" fill="#1f9a86"/>
<rect x="671" y="290" width="1" height="3" fill="#1f9a86"/>
<rect x="699" y="290" width="1" height="3" fill="#1f9a86"/>
<rect x="713" y="290" width="1" height="3" fill="#1f9a86"/>
<rect x="727" y="290" width="1" height="3" fill="#1f9a86"/>
<rect x="741" y="290" width="1" height="3" fill="#1f9a86"/>
<rect x="69" y="331" width="1" height="3" fill="#1f9a86"/>
<rect x="83" y="331" width="1" height="3" fill="#1f9a86"/>
<rect x="97" y="331" width="1" height="3" fill="#1f9a86"/>
<rect x="111" y="331" width="1" height="3" fill="#1f9a86"/>
<rect x="139" y="331" width="1" height="3" fill="#1f9a86"/>
<rect x="153" y="331" width="1" height="3" fill="#1f9a86"/>
<rect x="167" y="331" width="1" height="3" fill="#1f9a86"/>
<rect x="181" y="331" width="1" height="3" fill="#1f9a86"/>
<rect x="209" y="331" width="1" height="3" fill="#1f9a86"/>
<rect x="223" y="331" width="1" height="3" fill="#1f9a86"/>
<rect x="237" y="331" width="1" height="3" fill="#1f9a86"/>
<rect x="251" y="331" width="1" height="3" fill="#1f9a86"/>
<rect x="279" y="331" width="1" height="3" fill="#1f9a86"/>
<rect x="293" y="331" width="1" height="3" fill="#1f9a86"/>
<rect x="307" y="331" width="1" height="3" fill="#1f9a86"/>
<rect x="321" y="331" width="1" height="3" fill="#1f9a86"/>
<rect x="349" y="331" width="1" height="3" fill="#1f9a86"/>
<rect x="363" y="331" width="1" height="3" fill="#1f9a86"/>
<rect x="377" y="331" width="1" height="3" fill="#1f9a86"/>
<rect x="391" y="331" width="1" height="3" fill="#1f9a86"/>
<rect x="419" y="331" width="1" height="3" fill="#1f9a86"/>
<rect x="433" y="331" width="1" height="3" fill="#1f9a86"/>
<rect x="447" y="331" width="1" height="3" fill="#1f9a86"/>
<rect x="461" y="331" width="1" height="3" fill="#1f9a86"/>
<rect x="489" y="331" width="1" height="3" fill="#1f9a86"/>
<rect x="503" y="331" width="1" height="3" fill="#1f9a86"/>
<rect x="517" y="331" width="1" height="3" fill="#1f9a86"/>
<rect x="531" y="331" width="1" height="3" fill="#1f9a86"/>
<rect x="559" y="331" width="1" height="3" fill="#1f9a86"/>
<rect x="573" y="331" width="1" height="3" fill="#1f9a86"/>
<rect x="587" y="331" width="1" height="3" fill="#1f9a86"/>
<rect x="601" y="331" width="1" height="3" fill="#1f9a86"/>
<rect x="629" y="331" width="1" height="3" fill="#1f9a86"/>
<rect x="643" y="331" width="1" height="3" fill="#1f9a86"/>
<rect x="657" y="331" width="1" height="3" fill="#1f9a86"/>
<rect x="671" y="331" width="1" height="3" fill="#1f9a86"/>
<rect x="699" y="331" width="1" height="3" fill="#1f9a86"/>
<rect x="713" y="331" width="1" height="3" fill="#1f9a86"/>
<rect x="727" y="331" width="1" height="3" fill="#1f9a86"/>
<rect x="741" y="331" width="1" height="3" fill="#1f9a86"/>
<rect x="69" y="372" width="1" height="3" fill="#1f9a86"/>
<rect x="83" y="372" width="1" height="3" fill="#1f9a86"/>
<rect x="97" y="372" width="1" height="3" fill="#1f9a86"/>
<rect x="111" y="372" width="1" height="3" fill="#1f9a86"/>
<rect x="139" y="372" width="1" height="3" fill="#1f9a86"/>
<rect x="153" y="372" width="1" height="3" fill="#1f9a86"/>
<rect x="167" y="372" width="1" height="3" fill="#1f9a86"/>
<rect x="181" y="372" width="1" height="3" fill="#1f9a86"/>
<rect x="209" y="372" width="1" height="3" fill="#1f9a86"/>
<rect x="223" y="372" width="1" height="3" fill="#1f9a86"/>
<rect x="237" y="372" width="1" height="3" fill="#1f9a86"/>
<rect x="251" y="372" width="1" height="3" fill="#1f9a86"/>
<rect x="279" y="372" width="1" height="3" fill="#1f9a86"/>
<rect x="293" y="372" width="1" height="3" fill="#1f9a86"/>
<rect x="307" y="372" width="1" height="3" fill="#1f9a86"/>
<rect x="321" y="372" width="1" height="3" fill="#1f9a86"/>
<rect x="349" y="372" width="1" height="3" fill="#1f9a86"/>
<rect x="363" y="372" width="1" height="3" fill="#1f9a86"/>
<rect x="377" y="372" width="1" height="3" fill="#1f9a86"/>
<rect x="391" y="372" width="1" height="3" fill="#1f9a86"/>
<rect x="419" y="372" width="1" height="3" fill="#1f9a86"/>
<rect x="433" y="372" width="1" height="3" fill="#1f9a86"/>
<rect x="447" y="372" width="1" height="3" fill="#1f9a86"/>
<rect x="461" y="372" width="1" height="3" fill="#1f9a86"/>
<rect x="489" y="372" width="1" height="3" fill="#1f9a86"/>
<rect x="503" y="372" width="1" height="3" fill="#1f9a86"/>
<rect x="517" y="372" width="1" height="3" fill="#1f9a86"/>
<rect x="531" y="372" width="1" height="3" fill="#1f9a86"/>
<rect x="559" y="372" width="1" height="3" fill="#1f9a86"/>
<rect x="573" y="372" width="1" height="3" fill="#1f9a86"/>
<rect x="587" y="372" width="1" height="3" fill="#1f9a86"/>
<rect x="601" y="372" width="1" height="3" fill="#1f9a86"/>
<rect x="629" y="372" width="1" height="3" fill="#1f9a86"/>
<rect x="643" y="372" width="1" height="3" fill="#1f9a86"/>
<rect x="657" y="372" width="1" height="3" fill="#1f9a86"/>
<rect x="671" y="372" width="1" height="3" fill="#1f9a86"/>
<rect x="699" y="372" width="1" height="3" fill="#1f9a86"/>
<rect x="713" y="372" width="1" height="3" fill="#1f9a86"/>
<rect x="727" y="372" width="1" height="3" fill="#1f9a86"/>
<rect x="741" y="372" width="1" height="3" fill="#1f9a86"/>
<rect x="69" y="413" width="1" height="3" fill="#1f9a86"/>
<rect x="83" y="413" width="1" height="3" fill="#1f9a86"/>
<rect x="97" y="413" width="1" height="3" fill="#1f9a86"/>
<rect x="111" y="413" width="1" height="3" fill="#1f9a86"/>
<rect x="139" y="413" width="1" height="3" fill="#1f9a86"/>
<rect x="153" y="413" width="1" height="3" fill="#1f9a86"/>
<rect x="167" y="413" width="1" height="3" fill="#1f9a86"/>
<rect x="181" y="413" width="1" height="3" fill="#1f9a86"/>
<rect x="209" y="413" width="1" height="3" fill="#1f9a86"/>
<rect x="223" y="413" width="1" height="3" fill="#1f9a86"/>
<rect x="237" y="413" width="1" height="3" fill="#1f9a86"/>
<rect x="251" y="413" width="1" height="3" fill="#1f9a86"/>
<rect x="279" y="413" width="1" height="3" fill="#1f9a86"/>
<rect x="293" y="413" width="1" height="3" fill="#1f9a86"/>
<rect x="307" y="413" width="1" height="3" fill="#1f9a86"/>
<rect x="321" y="413" width="1" height="3" fill="#1f9a86"/>
<rect x="349" y="413" width="1" height="3" fill="#1f9a86"/>
<rect x="363" y="413" width="1" height="3" fill="#1f9a86"/>
<rect x="377" y="413" width="1" height="3" fill="#1f9a86"/>
<rect x="391" y="413" width="1" height="3" fill="#1f9a86"/>
<rect x="419" y="413" width="1" height="3" fill="#1f9a86"/>
<rect x="433" y="413" width="1" height="3" fill="#1f9a86"/>
<rect x="447" y="413" width="1" height="3" fill="#1f9a86"/>
<rect x="461" y="413" width="1" height="3" fill="#1f9a86"/>
<rect x="489" y="413" width="1" height="3" fill="#1f9a86"/>
<rect x="503" y="413" width="1" height="3" fill="#1f9a86"/>
<rect x="517" y="413" width="1" height="3" fill="#1f9a86"/>
<rect x="531" y="413" width="1" height="3" fill="#1f9a86"/>
<rect x="559" y="413" width="1" height="3" fill="#1f9a86"/>
<rect x="573" y="413" width="1" height="3" fill="#1f9a86"/>
<rect x="587" y="413" width="1" height="3" fill="#1f9a86"/>
<rect x="601" y="413" width="1" height="3" fill="#1f9a86"/>
<rect x="629" y="413" width="1" height="3" fill="#1f9a86"/>
<rect x="643" y="413" width="1" height="3" fill="#1f9a86"/>
<rect x="657" y="413" width="1" height="3" fill="#1f9a86"/>
<rect x="671" y="413" width="1" height="3" fill="#1f9a86"/>
<rect x="699" y="413" width="1" height="3" fill="#1f9a86"/>
<rect x="713" y="413" width="1" height="3" fill="#1f9a86"/>
<rect x="727" y="413" width="1" height="3" fill="#1f9a86"/>
<rect x="741" y="413" width="1" height="3" fill="#1f9a86"/>
<rect x="69" y="454" width="1" height="3" fill="#1f9a86"/>
<rect x="83" y="454" width="1" height="3" fill="#1f9a86"/>
<rect x="97" y="454" width="1" height="3" fill="#1f9a86"/>
<rect x="111" y="454" width="1" height="3" fill="#1f9a86"/>
<rect x="139" y="454" width="1" height="3" fill="#1f9a86"/>
<rect x="153" y="454" width="1" height="3" fill="#1f9a86"/>
<rect x="167" y="454" width="1" height="3" fill="#1f9a86"/>
<rect x="181" y="454" width="1" height="3" fill="#1f9a86"/>
<rect x="209" y="454" width="1" height="3" fill="#1f9a86"/>
<rect x="223" y="454" width="1" height="3" fill="#1f9a86"/>
<rect x="237" y="454" width="1" height="3" fill="#1f9a86"/>
<rect x="251" y="454" width="1" height="3" fill="#1f9a86"/>
<rect x="279" y="454" width="1" height="3" fill="#1f9a86"/>
<rect x="293" y="454" width="1" height="3" fill="#1f9a86"/>
<rect x="307" y="454" width="1" height="3" fill="#1f9a86"/>
<rect x="321" y="454" width="1" height="3" fill="#1f9a86"/>
<rect x="349" y="454" width="1" height="3" fill="#1f9a86"/>
<rect x="363" y="454" width="1" height="3" fill="#1f9a86"/>
<rect x="377" y="454" width="1" height="3" fill="#1f9a86"/>
<rect x="391" y="454" width="1" height="3" fill="#1f9a86"/>
<rect x="419" y="454" width="1" height="3" fill="#1f9a86"/>
<rect x="433" y="454" width="1" height="3" fill="#1f9a86"/>
<rect x="447" y="454" width="1" height="3" fill="#1f9a86"/>
<rect x="461" y="454" width="1" height="3" fill="#1f9a86"/>
<rect x="489" y="454" width="1" height="3" fill="#1f9a86"/>
<rect x="503" y="454" width="1" height="3" fill="#1f9a86"/>
<rect x="517" y="454" width="1" height="3" fill="#1f9a86"/>
<rect x="531" y="454" width="1" height="3" fill="#1f9a86"/>
<rect x="559" y="454" width="1" height="3" fill="#1f9a86"/>
<rect x="573" y="454" width="1" height="3" fill="#1f9a86"/>
<rect x="587" y="454" width="1" height="3" fill="#1f9a86"/>
<rect x="601" y="454" width="1" height="3" fill="#1f9a86"/>
<rect x="629" y="454" width="1" height="3" fill="#1f9a86"/>
<rect x="643" y="454" width="1" height="3" fill="#1f9a86"/>
<rect x="657" y="454" width="1" height="3" fill="#1f9a86"/>
<rect x="671" y="454" width="1" height="3" fill="#1f9a86"/>
<rect x="699" y="454" width="1" height="3" fill="#1f9a86"/>
<rect x="713" y="454" width="1" height="3" fill="#1f9a86"/>
<rect x="727" y="454" width="1" height="3" fill="#1f9a86"/>
<rect x="741" y="454" width="1" height="3" fill="#1f9a86"/>
<rect x="69" y="495" width="1" height="3" fill="#1f9a86"/>
<rect x="83" y="495" width="1" height="3" fill="#1f9a86"/>
<rect x="97" y="495" width="1" height="3" fill="#1f9a86"/>
<rect x="111" y="495" width="1" height="3" fill="#1f9a86"/>
<rect x="139" y="495" width="1" height="3" fill="#1f9a86"/>
<rect x="153" y="495" width="1" height="3" fill="#1f9a86"/>
<rect x="167" y="495" width="1" height="3" fill="#1f9a86"/>
<rect x="181" y="495" width="1" height="3" fill="#1f9a86"/>
<rect x="209" y="495" width="1" height="3" fill="#1f9a86"/>
<rect x="223" y="495" width="1" height="3" fill="#1f9a86"/>
<rect x="237" y="495" width="1" height="3" fill="#1f9a86"/>
<rect x="251" y="495" width="1" height="3" fill="#1f9a86"/>
<rect x="279" y="495" width="1" height="3" fill="#1f9a86"/>
<rect x="293" y="495" width="1" height="3" fill="#1f9a86"/>
<rect x="307" y="495" width="1" height="3" fill="#1f9a86"/>
<rect x="321" y="495" width="1" height="3" fill="#1f9a86"/>
<rect x="349" y="495" width="1" height="3" fill="#1f9a86"/>
<rect x="363" y="495" width="1" height="3" fill="#1f9a86"/>
<rect x="377" y="495" width="1" height="3" fill="#1f9a86"/>
<rect x="391" y="495" width="1" height="3" fill="#1f9a86"/>
<rect x="419" y="495" width="1" height="3" fill="#1f9a86"/>
<rect x="433" y="495" width="1" height="3" fill="#1f9a86"/>
<rect x="447" y="495" width="1" height="3" fill="#1f9a86"/>
<rect x="461" y="495" width="1" height="3" fill="#1f9a86"/>
<rect x="489" y="495" width="1" height="3" fill="#1f9a86"/>
<rect x="503" y="495" width="1" height="3" fill="#1f9a86"/>
<rect x="517" y="495" width="1" height="3" fill="#1f9a86"/>
<rect x="531" y="495" width="1" height="3" fill="#1f9a86"/>
<rect x="559" y="495" width="1" height="3" fill="#1f9a86"/>
<rect x="573" y="495" width="1" height="3" fill="#1f9a86"/>
<rect x="587" y="495" width="1" height="3" fill="#1f9a86"/>
<rect x="601" y="495" width="1" height="3" fill="#1f9a86"/>
<rect x="629" y="495" width="1" height="3" fill="#1f9a86"/>
<rect x="643" y="495" width="1" height="3" fill="#1f9a86"/>
<rect x="657" y="495" width="1" height="3" fill="#1f9a86"/>
<rect x="671" y="495" width="1" height="3" fill="#1f9a86"/>
<rect x="699" y="495" width="1" height="3" fill="#1f9a86"/>
<rect x="713" y="495" width="1" height="3" fill="#1f9a86"/>
<rect x="727" y="495" width="1" height="3" fill="#1f9a86"/>
<rect x="741" y="495" width="1" height="3" fill="#1f9a86"/>
<rect x="69" y="536" width="1" height="3" fill="#1f9a86"/>
<rect x="83" y="536" width="1" height="3" fill="#1f9a86"/>
<rect x="97" y="536" width="1" height="3" fill="#1f9a86"/>
<rect x="111" y="536" width="1" height="3" fill="#1f9a86"/>
<rect x="139" y="536" width="1" height="3" fill="#1f9a86"/>
<rect x="153" y="536" width="1" height="3" fill="#1f9a86"/>
<rect x="167" y="536" width="1" height="3" fill="#1f9a86"/>
<rect x="181" y="536" width="1" height="3" fill="#1f9a86"/>
<rect x="209" y="536" width="1" height="3" fill="#1f9a86"/>
<rect x="223" y="536" width="1" height="3" fill="#1f9a86"/>
<rect x="237" y="536" width="1" height="3" fill="#1f9a86"/>
<rect x="251" y="536" width="1" height="3" fill="#1f9a86"/>
<rect x="279" y="536" width="1" height="3" fill="#1f9a86"/>
<rect x="293" y="536" width="1" height="3" fill="#1f9a86"/>
<rect x="307" y="536" width="1" height="3" fill="#1f9a86"/>
<rect x="321" y="536" width="1" height="3" fill="#1f9a86"/>
<rect x="349" y="536" width="1" height="3" fill="#1f9a86"/>
<rect x="363" y="536" width="1" height="3" fill="#1f9a86"/>
<rect x="377" y="536" width="1" height="3" fill="#1f9a86"/>
<rect x="391" y="536" width="1" height="3" fill="#1f9a86"/>
<rect x="419" y="536" width="1" height="3" fill="#1f9a86"/>
<rect x="433" y="536" width="1" height="3" fill="#1f9a86"/>
<rect x="447" y="536" width="1" height="3" fill="#1f9a86"/>
<rect x="461" y="536" width="1" height="3" fill="#1f9a86"/>
<rect x="489" y="536" width="1" height="3" fill="#1f9a86"/>
<rect x="503" y="536" width="1" height="3" fill="#1f9a86"/>
<rect x="517" y="536" width="1" height="3" fill="#1f9a86"/>
<rect x="531" y="536" width="1" height="3" fill="#1f9a86"/>
<rect x="559" y="536" width="1" height="3" fill="#1f9a86"/>
<rect x="573" y="536" width="1" height="3" fill="#1f9a86"/>
<rect x="587" y="536" width="1" height="3" fill="#1f9a86"/>
<rect x="601" y="536" width="1" height="3" fill="#1f9a86"/>
<rect x="629" y="536" width="1" height="3" fill="#1f9a86"/>
<rect x="643" y="536" width="1" height="3" fill="#1f9a86"/>
<rect x="657" y="536" width="1" height="3" fill="#1f9a86"/>
<rect x="671" y="536" width="1" height="3" fill="#1f9a86"/>
<rect x="699" y="536" width="1" height="3" fill="#1f9a86"/>
<rect x="713" y="536" width="1" height="3" fill="#1f9a86"/>
<rect x="727" y="536" width="1" height="3" fill="#1f9a86"/>
<rect x="741" y="536" width="1" height="3" fill="#1f9a86"/>
<rect x="69" y="577" width="1" height="3" fill="#1f9a86"/>
<rect x="83" y="577" width="1" height="3" fill="#1f9a86"/>
<rect x="97" y="577" width="1" height="3" fill="#1f9a86"/>
<rect x="111" y="577" width="1" height="3" fill="#1f9a86"/>
<rect x="139" y="577" width="1" height="3" fill="#1f9a86"/>
<rect x="153" y="577" width="1" height="3" fill="#1f9a86"/>
<rect x="167" y="577" width="1" height="3" fill="#1f9a86"/>
<rect x="181" y="577" width="1" height="3" fill="#1f9a86"/>
<rect x="209" y="577" width="1" height="3" fill="#1f9a86"/>
<rect x="223" y="577" width="1" height="3" fill="#1f9a86"/>
<rect x="237" y="577" width="1" height="3" fill="#1f9a86"/>
<rect x="251" y="577" width="1" height="3" fill="#1f9a86"/>
<rect x="279" y="577" width="1" height="3" fill="#1f9a86"/>
<rect x="293" y="577" width="1" height="3" fill="#1f9a86"/>
<rect x="307" y="577" width="1" height="3" fill="#1f9a86"/>
<rect x="321" y="577" width="1" height="3" fill="#1f9a86"/>
<rect x="349" y="577" width="1" height="3" fill="#1f9a86"/>
<rect x="363" y="577" width="1" height="3" fill="#1f9a86"/>
<rect x="377" y="577" width="1" height="3" fill="#1f9a86"/>
<rect x="391" y="577" width="1" height="3" fill="#1f9a86"/>
<rect x="419" y="577" width="1" height="3" fill="#1f9a86"/>
<rect x="433" y="577" width="1" height="3" fill="#1f9a86"/>
<rect x="447" y="577" width="1" height="3" fill="#1f9a86"/>
<rect x="461" y="577" width="1" height="3" fill="#1f9a86"/>
<rect x="489" y="577" width="1" height="3" fill="#1f9a86"/>
<rect x="503" y="577" width="1" height="3" fill="#1f9a86"/>
<rect x="517" y="577" width="1" height="3" fill="#1f9a86"/>
<rect x="531" y="577" width="1" height="3" fill="#1f9a86"/>
<rect x="559" y="577" width="1" height="3" fill="#1f9a86"/>
<rect x="573" y="577" width="1" height="3" fill="#1f9a86"/>
<rect x="587" y="577" width="1" height="3" fill="#1f9a86"/>
<rect x="601" y="577" width="1" height="3" fill="#1f9a86"/>
<rect x="629" y="577" width="1" height="3" fill="#1f9a86"/>
<rect x="643" y="577" width="1" height="3" fill="#1f9a86"/>
<rect x="657" y="577" width="1" height="3" fill="#1f9a86"/>
<rect x="671" y="577" width="1" height="3" fill="#1f9a86"/>
<rect x="699" y="577" width="1" height="3" fill="#1f9a86"/>
<rect x="713" y="577" width="1" height="3" fill="#1f9a86"/>
<rect x="727" y="577" width="1" height="3" fill="#1f9a86"/>
<rect x="741" y="577" width="1" height="3" fill="#1f9a86"/>
<rect x="124" y="250" width="3" height="1" fill="#1f9a86"/><rect x="125" y="249" width="1" height="3" fill="#1f9a86"/>
<rect x="124" y="291" width="3" height="1" fill="#1f9a86"/><rect x="125" y="290" width="1" height="3" fill="#1f9a86"/>
<rect x="124" y="332" width="3" height="1" fill="#1f9a86"/><rect x="125" y="331" width="1" height="3" fill="#1f9a86"/>
<rect x="124" y="373" width="3" height="1" fill="#1f9a86"/><rect x="125" y="372" width="1" height="3" fill="#1f9a86"/>
<rect x="123" y="414" width="5" height="1" fill="#1f9a86"/><rect x="125" y="412" width="1" height="5" fill="#1f9a86"/>
<rect x="124" y="455" width="3" height="1" fill="#1f9a86"/><rect x="125" y="454" width="1" height="3" fill="#1f9a86"/>
<rect x="124" y="496" width="3" height="1" fill="#1f9a86"/><rect x="125" y="495" width="1" height="3" fill="#1f9a86"/>
<rect x="124" y="537" width="3" height="1" fill="#1f9a86"/><rect x="125" y="536" width="1" height="3" fill="#1f9a86"/>
<rect x="124" y="578" width="3" height="1" fill="#1f9a86"/><rect x="125" y="577" width="1" height="3" fill="#1f9a86"/>
<rect x="194" y="250" width="3" height="1" fill="#1f9a86"/><rect x="195" y="249" width="1" height="3" fill="#1f9a86"/>
<rect x="194" y="291" width="3" height="1" fill="#1f9a86"/><rect x="195" y="290" width="1" height="3" fill="#1f9a86"/>
<rect x="194" y="332" width="3" height="1" fill="#1f9a86"/><rect x="195" y="331" width="1" height="3" fill="#1f9a86"/>
<rect x="194" y="373" width="3" height="1" fill="#1f9a86"/><rect x="195" y="372" width="1" height="3" fill="#1f9a86"/>
<rect x="193" y="414" width="5" height="1" fill="#1f9a86"/><rect x="195" y="412" width="1" height="5" fill="#1f9a86"/>
<rect x="194" y="455" width="3" height="1" fill="#1f9a86"/><rect x="195" y="454" width="1" height="3" fill="#1f9a86"/>
<rect x="194" y="496" width="3" height="1" fill="#1f9a86"/><rect x="195" y="495" width="1" height="3" fill="#1f9a86"/>
<rect x="194" y="537" width="3" height="1" fill="#1f9a86"/><rect x="195" y="536" width="1" height="3" fill="#1f9a86"/>
<rect x="194" y="578" width="3" height="1" fill="#1f9a86"/><rect x="195" y="577" width="1" height="3" fill="#1f9a86"/>
<rect x="264" y="250" width="3" height="1" fill="#1f9a86"/><rect x="265" y="249" width="1" height="3" fill="#1f9a86"/>
<rect x="264" y="291" width="3" height="1" fill="#1f9a86"/><rect x="265" y="290" width="1" height="3" fill="#1f9a86"/>
<rect x="264" y="332" width="3" height="1" fill="#1f9a86"/><rect x="265" y="331" width="1" height="3" fill="#1f9a86"/>
<rect x="264" y="373" width="3" height="1" fill="#1f9a86"/><rect x="265" y="372" width="1" height="3" fill="#1f9a86"/>
<rect x="263" y="414" width="5" height="1" fill="#1f9a86"/><rect x="265" y="412" width="1" height="5" fill="#1f9a86"/>
<rect x="264" y="455" width="3" height="1" fill="#1f9a86"/><rect x="265" y="454" width="1" height="3" fill="#1f9a86"/>
<rect x="264" y="496" width="3" height="1" fill="#1f9a86"/><rect x="265" y="495" width="1" height="3" fill="#1f9a86"/>
<rect x="264" y="537" width="3" height="1" fill="#1f9a86"/><rect x="265" y="536" width="1" height="3" fill="#1f9a86"/>
<rect x="264" y="578" width="3" height="1" fill="#1f9a86"/><rect x="265" y="577" width="1" height="3" fill="#1f9a86"/>
<rect x="334" y="250" width="3" height="1" fill="#1f9a86"/><rect x="335" y="249" width="1" height="3" fill="#1f9a86"/>
<rect x="334" y="291" width="3" height="1" fill="#1f9a86"/><rect x="335" y="290" width="1" height="3" fill="#1f9a86"/>
<rect x="334" y="332" width="3" height="1" fill="#1f9a86"/><rect x="335" y="331" width="1" height="3" fill="#1f9a86"/>
<rect x="334" y="373" width="3" height="1" fill="#1f9a86"/><rect x="335" y="372" width="1" height="3" fill="#1f9a86"/>
<rect x="333" y="414" width="5" height="1" fill="#1f9a86"/><rect x="335" y="412" width="1" height="5" fill="#1f9a86"/>
<rect x="334" y="455" width="3" height="1" fill="#1f9a86"/><rect x="335" y="454" width="1" height="3" fill="#1f9a86"/>
<rect x="334" y="496" width="3" height="1" fill="#1f9a86"/><rect x="335" y="495" width="1" height="3" fill="#1f9a86"/>
<rect x="334" y="537" width="3" height="1" fill="#1f9a86"/><rect x="335" y="536" width="1" height="3" fill="#1f9a86"/>
<rect x="334" y="578" width="3" height="1" fill="#1f9a86"/><rect x="335" y="577" width="1" height="3" fill="#1f9a86"/>
<rect x="403" y="250" width="5" height="1" fill="#1f9a86"/><rect x="405" y="248" width="1" height="5" fill="#1f9a86"/>
<rect x="403" y="291" width="5" height="1" fill="#1f9a86"/><rect x="405" y="289" width="1" height="5" fill="#1f9a86"/>
<rect x="403" y="332" width="5" height="1" fill="#1f9a86"/><rect x="405" y="330" width="1" height="5" fill="#1f9a86"/>
<rect x="403" y="373" width="5" height="1" fill="#1f9a86"/><rect x="405" y="371" width="1" height="5" fill="#1f9a86"/>
<rect x="403" y="414" width="5" height="1" fill="#1f9a86"/><rect x="405" y="412" width="1" height="5" fill="#1f9a86"/>
<rect x="403" y="455" width="5" height="1" fill="#1f9a86"/><rect x="405" y="453" width="1" height="5" fill="#1f9a86"/>
<rect x="403" y="496" width="5" height="1" fill="#1f9a86"/><rect x="405" y="494" width="1" height="5" fill="#1f9a86"/>
<rect x="403" y="537" width="5" height="1" fill="#1f9a86"/><rect x="405" y="535" width="1" height="5" fill="#1f9a86"/>
<rect x="403" y="578" width="5" height="1" fill="#1f9a86"/><rect x="405" y="576" width="1" height="5" fill="#1f9a86"/>
<rect x="474" y="250" width="3" height="1" fill="#1f9a86"/><rect x="475" y="249" width="1" height="3" fill="#1f9a86"/>
<rect x="474" y="291" width="3" height="1" fill="#1f9a86"/><rect x="475" y="290" width="1" height="3" fill="#1f9a86"/>
<rect x="474" y="332" width="3" height="1" fill="#1f9a86"/><rect x="475" y="331" width="1" height="3" fill="#1f9a86"/>
<rect x="474" y="373" width="3" height="1" fill="#1f9a86"/><rect x="475" y="372" width="1" height="3" fill="#1f9a86"/>
<rect x="473" y="414" width="5" height="1" fill="#1f9a86"/><rect x="475" y="412" width="1" height="5" fill="#1f9a86"/>
<rect x="474" y="455" width="3" height="1" fill="#1f9a86"/><rect x="475" y="454" width="1" height="3" fill="#1f9a86"/>
<rect x="474" y="496" width="3" height="1" fill="#1f9a86"/><rect x="475" y="495" width="1" height="3" fill="#1f9a86"/>
<rect x="474" y="537" width="3" height="1" fill="#1f9a86"/><rect x="475" y="536" width="1" height="3" fill="#1f9a86"/>
<rect x="474" y="578" width="3" height="1" fill="#1f9a86"/><rect x="475" y="577" width="1" height="3" fill="#1f9a86"/>
<rect x="544" y="250" width="3" height="1" fill="#1f9a86"/><rect x="545" y="249" width="1" height="3" fill="#1f9a86"/>
<rect x="544" y="291" width="3" height="1" fill="#1f9a86"/><rect x="545" y="290" width="1" height="3" fill="#1f9a86"/>
<rect x="544" y="332" width="3" height="1" fill="#1f9a86"/><rect x="545" y="331" width="1" height="3" fill="#1f9a86"/>
<rect x="544" y="373" width="3" height="1" fill="#1f9a86"/><rect x="545" y="372" width="1" height="3" fill="#1f9a86"/>
<rect x="543" y="414" width="5" height="1" fill="#1f9a86"/><rect x="545" y="412" width="1" height="5" fill="#1f9a86"/>
<rect x="544" y="455" width="3" height="1" fill="#1f9a86"/><rect x="545" y="454" width="1" height="3" fill="#1f9a86"/>
<rect x="544" y="496" width="3" height="1" fill="#1f9a86"/><rect x="545" y="495" width="1" height="3" fill="#1f9a86"/>
<rect x="544" y="537" width="3" height="1" fill="#1f9a86"/><rect x="545" y="536" width="1" height="3" fill="#1f9a86"/>
<rect x="544" y="578" width="3" height="1" fill="#1f9a86"/><rect x="545" y="577" width="1" height="3" fill="#1f9a86"/>
<rect x="614" y="250" width="3" height="1" fill="#1f9a86"/><rect x="615" y="249" width="1" height="3" fill="#1f9a86"/>
<rect x="614" y="291" width="3" height="1" fill="#1f9a86"/><rect x="615" y="290" width="1" height="3" fill="#1f9a86"/>
<rect x="614" y="332" width="3" height="1" fill="#1f9a86"/><rect x="615" y="331" width="1" height="3" fill="#1f9a86"/>
<rect x="614" y="373" width="3" height="1" fill="#1f9a86"/><rect x="615" y="372" width="1" height="3" fill="#1f9a86"/>
<rect x="613" y="414" width="5" height="1" fill="#1f9a86"/><rect x="615" y="412" width="1" height="5" fill="#1f9a86"/>
<rect x="614" y="455" width="3" height="1" fill="#1f9a86"/><rect x="615" y="454" width="1" height="3" fill="#1f9a86"/>
<rect x="614" y="496" width="3" height="1" fill="#1f9a86"/><rect x="615" y="495" width="1" height="3" fill="#1f9a86"/>
<rect x="614" y="537" width="3" height="1" fill="#1f9a86"/><rect x="615" y="536" width="1" height="3" fill="#1f9a86"/>
<rect x="614" y="578" width="3" height="1" fill="#1f9a86"/><rect x="615" y="577" width="1" height="3" fill="#1f9a86"/>
<rect x="684" y="250" width="3" height="1" fill="#1f9a86"/><rect x="685" y="249" width="1" height="3" fill="#1f9a86"/>
<rect x="684" y="291" width="3" height="1" fill="#1f9a86"/><rect x="685" y="290" width="1" height="3" fill="#1f9a86"/>
<rect x="684" y="332" width="3" height="1" fill="#1f9a86"/><rect x="685" y="331" width="1" height="3" fill="#1f9a86"/>
<rect x="684" y="373" width="3" height="1" fill="#1f9a86"/><rect x="685" y="372" width="1" height="3" fill="#1f9a86"/>
<rect x="683" y="414" width="5" height="1" fill="#1f9a86"/><rect x="685" y="412" width="1" height="5" fill="#1f9a86"/>
<rect x="684" y="455" width="3" height="1" fill="#1f9a86"/><rect x="685" y="454" width="1" height="3" fill="#1f9a86"/>
<rect x="684" y="496" width="3" height="1" fill="#1f9a86"/><rect x="685" y="495" width="1" height="3" fill="#1f9a86"/>
<rect x="684" y="537" width="3" height="1" fill="#1f9a86"/><rect x="685" y="536" width="1" height="3" fill="#1f9a86"/>
<rect x="684" y="578" width="3" height="1" fill="#1f9a86"/><rect x="685" y="577" width="1" height="3" fill="#1f9a86"/>
<rect x="55.5" y="209.5" width="700" height="410" fill="none" stroke="#1f9a86" stroke-width="3"/>
<g fill="#383838"><rect x="54" y="208" width="1" height="1"/><rect x="756" y="208" width="1" height="1"/><rect x="54" y="620" width="1" height="1"/><rect x="756" y="620" width="1" height="1"/></g>
<path d="M58 306h1v1h-1zM71 306h1v1h-1zM75 306h1v1h-1zM96 306h2v1h-2zM101 306h2v1h-2zM106 306h1v1h-1zM109 306h2v1h-2zM114 306h1v1h-1zM116 306h1v1h-1zM131 306h1v1h-1zM133 306h1v1h-1zM136 306h1v1h-1zM138 306h1v1h-1zM141 306h1v1h-1zM143 306h1v1h-1zM147 306h1v1h-1zM151 306h2v1h-2zM155 306h2v1h-2zM169 306h1v1h-1zM172 306h1v1h-1zM179 306h1v1h-1zM204 306h2v1h-2zM208 306h1v1h-1zM210 306h1v1h-1zM213 306h1v1h-1zM216 306h1v1h-1zM218 306h1v1h-1zM221 306h2v1h-2zM225 306h2v1h-2zM233 306h3v1h-3zM238 306h2v1h-2zM242 306h2v1h-2zM246 306h2v1h-2zM250 306h2v1h-2zM254 306h2v1h-2zM258 306h2v1h-2zM262 306h2v1h-2zM266 306h2v1h-2zM270 306h2v1h-2zM285 306h1v1h-1zM290 306h1v1h-1zM309 306h1v1h-1zM313 306h2v1h-2zM317 306h2v1h-2zM321 306h2v1h-2zM325 306h3v1h-3zM337 306h2v1h-2zM340 306h1v1h-1zM343 306h2v1h-2zM347 306h2v1h-2zM351 306h2v1h-2zM355 306h1v1h-1zM359 306h1v1h-1zM361 306h1v1h-1zM367 306h1v1h-1zM374 306h1v1h-1zM393 306h1v1h-1zM408 306h1v1h-1zM410 306h1v1h-1zM414 306h1v1h-1zM417 306h1v1h-1zM421 306h2v1h-2zM426 306h2v1h-2zM430 306h1v1h-1zM440 306h1v1h-1zM442 306h1v1h-1zM450 306h3v1h-3zM456 306h2v1h-2zM461 306h2v1h-2zM465 306h1v1h-1zM469 306h2v1h-2zM473 306h1v1h-1zM476 306h1v1h-1zM505 306h1v1h-1zM511 306h3v1h-3zM520 306h2v1h-2zM526 306h1v1h-1zM533 306h1v1h-1zM535 306h1v1h-1zM556 306h3v1h-3zM562 306h2v1h-2zM566 306h2v1h-2zM570 306h1v1h-1zM591 306h1v1h-1zM614 306h1v1h-1zM621 306h2v1h-2zM625 306h2v1h-2zM629 306h2v1h-2zM634 306h2v1h-2zM638 306h2v1h-2zM643 306h1v1h-1zM646 306h1v1h-1zM648 306h1v1h-1zM660 306h3v1h-3zM666 306h2v1h-2zM670 306h1v1h-1zM672 306h1v1h-1zM676 306h2v1h-2zM709 306h1v1h-1zM713 306h1v1h-1zM716 306h2v1h-2zM720 306h2v1h-2zM725 306h2v1h-2zM730 306h1v1h-1zM732 306h1v1h-1zM735 306h2v1h-2zM739 306h2v1h-2zM743 306h1v1h-1zM745 306h1v1h-1zM57 308h1v1h-1zM59 308h16v1h-16zM76 308h20v1h-20zM98 308h3v1h-3zM103 308h3v1h-3zM107 308h2v1h-2zM111 308h3v1h-3zM115 308h1v1h-1zM132 308h1v1h-1zM134 308h2v1h-2zM139 308h2v1h-2zM144 308h3v1h-3zM148 308h3v1h-3zM153 308h2v1h-2zM157 308h15v1h-15zM173 308h6v1h-6zM180 308h24v1h-24zM206 308h2v1h-2zM211 308h2v1h-2zM214 308h2v1h-2zM219 308h2v1h-2zM223 308h2v1h-2zM226 308h1v1h-1zM233 308h1v1h-1zM236 308h2v1h-2zM240 308h2v1h-2zM244 308h2v1h-2zM248 308h2v1h-2zM252 308h2v1h-2zM256 308h2v1h-2zM260 308h2v1h-2zM264 308h2v1h-2zM268 308h2v1h-2zM272 308h1v1h-1zM284 308h1v1h-1zM286 308h4v1h-4zM291 308h18v1h-18zM310 308h3v1h-3zM315 308h2v1h-2zM319 308h2v1h-2zM323 308h2v1h-2zM327 308h1v1h-1zM337 308h1v1h-1zM341 308h2v1h-2zM345 308h2v1h-2zM349 308h2v1h-2zM353 308h2v1h-2zM356 308h3v1h-3zM362 308h5v1h-5zM368 308h6v1h-6zM375 308h18v1h-18zM394 308h14v1h-14zM411 308h3v1h-3zM415 308h2v1h-2zM418 308h3v1h-3zM423 308h3v1h-3zM428 308h3v1h-3zM441 308h1v1h-1zM450 308h1v1h-1zM453 308h3v1h-3zM458 308h3v1h-3zM463 308h2v1h-2zM466 308h3v1h-3zM471 308h2v1h-2zM474 308h2v1h-2zM477 308h31v1h-31zM524 308h2v1h-2zM527 308h6v1h-6zM534 308h1v1h-1zM556 308h1v1h-1zM559 308h3v1h-3zM564 308h2v1h-2zM568 308h2v1h-2zM571 308h50v1h-50zM623 308h2v1h-2zM627 308h2v1h-2zM631 308h3v1h-3zM636 308h2v1h-2zM640 308h3v1h-3zM644 308h2v1h-2zM648 308h1v1h-1zM660 308h1v1h-1zM663 308h3v1h-3zM668 308h2v1h-2zM673 308h3v1h-3zM677 308h2v1h-2zM698 308h11v1h-11zM710 308h3v1h-3zM714 308h2v1h-2zM718 308h2v1h-2zM722 308h3v1h-3zM727 308h3v1h-3zM733 308h2v1h-2zM737 308h2v1h-2zM741 308h2v1h-2zM744 308h2v1h-2zM58 305h1v1h-1zM71 305h1v1h-1zM75 305h1v1h-1zM96 305h2v1h-2zM101 305h2v1h-2zM106 305h1v1h-1zM109 305h2v1h-2zM114 305h1v1h-1zM117 305h15v1h-15zM133 305h1v1h-1zM136 305h3v1h-3zM141 305h3v1h-3zM147 305h1v1h-1zM151 305h2v1h-2zM155 305h2v1h-2zM169 305h1v1h-1zM172 305h1v1h-1zM179 305h1v1h-1zM204 305h2v1h-2zM208 305h3v1h-3zM213 305h1v1h-1zM216 305h3v1h-3zM221 305h2v1h-2zM225 305h11v1h-11zM238 305h2v1h-2zM242 305h2v1h-2zM246 305h2v1h-2zM250 305h2v1h-2zM254 305h2v1h-2zM258 305h2v1h-2zM262 305h2v1h-2zM266 305h2v1h-2zM270 305h2v1h-2zM285 305h1v1h-1zM290 305h1v1h-1zM309 305h1v1h-1zM313 305h2v1h-2zM317 305h2v1h-2zM321 305h2v1h-2zM325 305h16v1h-16zM343 305h2v1h-2zM347 305h2v1h-2zM351 305h2v1h-2zM355 305h1v1h-1zM359 305h3v1h-3zM367 305h1v1h-1zM374 305h1v1h-1zM393 305h1v1h-1zM408 305h3v1h-3zM414 305h1v1h-1zM417 305h1v1h-1zM421 305h2v1h-2zM426 305h2v1h-2zM430 305h11v1h-11zM442 305h11v1h-11zM456 305h2v1h-2zM461 305h2v1h-2zM465 305h1v1h-1zM469 305h2v1h-2zM473 305h1v1h-1zM476 305h1v1h-1zM505 305h1v1h-1zM514 305h6v1h-6zM526 305h1v1h-1zM533 305h1v1h-1zM536 305h23v1h-23zM562 305h2v1h-2zM566 305h2v1h-2zM570 305h1v1h-1zM591 305h1v1h-1zM614 305h1v1h-1zM621 305h2v1h-2zM625 305h2v1h-2zM629 305h2v1h-2zM634 305h2v1h-2zM638 305h2v1h-2zM643 305h1v1h-1zM646 305h17v1h-17zM666 305h2v1h-2zM670 305h3v1h-3zM676 305h2v1h-2zM709 305h1v1h-1zM713 305h1v1h-1zM716 305h2v1h-2zM720 305h2v1h-2zM725 305h2v1h-2zM730 305h3v1h-3zM735 305h2v1h-2zM739 305h2v1h-2zM743 305h1v1h-1zM745 305h9v1h-9zM57 307h1v1h-1zM59 307h1v1h-1zM70 307h1v1h-1zM72 307h1v1h-1zM74 307h1v1h-1zM76 307h1v1h-1zM95 307h1v1h-1zM98 307h1v1h-1zM100 307h1v1h-1zM103 307h1v1h-1zM105 307h1v1h-1zM107 307h2v1h-2zM111 307h1v1h-1zM113 307h1v1h-1zM115 307h2v1h-2zM132 307h1v1h-1zM134 307h2v1h-2zM139 307h2v1h-2zM144 307h1v1h-1zM146 307h1v1h-1zM148 307h1v1h-1zM150 307h1v1h-1zM153 307h2v1h-2zM157 307h1v1h-1zM168 307h1v1h-1zM170 307h2v1h-2zM173 307h1v1h-1zM178 307h1v1h-1zM180 307h1v1h-1zM203 307h1v1h-1zM206 307h2v1h-2zM211 307h2v1h-2zM214 307h2v1h-2zM219 307h2v1h-2zM223 307h2v1h-2zM226 307h1v1h-1zM233 307h1v1h-1zM236 307h2v1h-2zM240 307h2v1h-2zM244 307h2v1h-2zM248 307h2v1h-2zM252 307h2v1h-2zM256 307h2v1h-2zM260 307h2v1h-2zM264 307h2v1h-2zM268 307h2v1h-2zM272 307h1v1h-1zM284 307h1v1h-1zM286 307h1v1h-1zM289 307h1v1h-1zM291 307h1v1h-1zM308 307h1v1h-1zM310 307h1v1h-1zM312 307h1v1h-1zM315 307h2v1h-2zM319 307h2v1h-2zM323 307h2v1h-2zM327 307h1v1h-1zM337 307h1v1h-1zM341 307h2v1h-2zM345 307h2v1h-2zM349 307h2v1h-2zM353 307h2v1h-2zM356 307h1v1h-1zM358 307h1v1h-1zM362 307h1v1h-1zM366 307h1v1h-1zM368 307h1v1h-1zM373 307h1v1h-1zM375 307h1v1h-1zM392 307h1v1h-1zM394 307h1v1h-1zM407 307h1v1h-1zM411 307h1v1h-1zM413 307h1v1h-1zM415 307h2v1h-2zM418 307h1v1h-1zM420 307h1v1h-1zM423 307h1v1h-1zM425 307h1v1h-1zM428 307h3v1h-3zM441 307h1v1h-1zM450 307h1v1h-1zM453 307h1v1h-1zM455 307h1v1h-1zM458 307h1v1h-1zM460 307h1v1h-1zM463 307h2v1h-2zM466 307h1v1h-1zM468 307h1v1h-1zM471 307h2v1h-2zM474 307h2v1h-2zM477 307h1v1h-1zM504 307h1v1h-1zM506 307h1v1h-1zM508 307h3v1h-3zM522 307h2v1h-2zM525 307h1v1h-1zM527 307h1v1h-1zM532 307h1v1h-1zM534 307h2v1h-2zM556 307h1v1h-1zM559 307h1v1h-1zM561 307h1v1h-1zM564 307h2v1h-2zM568 307h2v1h-2zM571 307h1v1h-1zM590 307h1v1h-1zM592 307h1v1h-1zM613 307h1v1h-1zM615 307h1v1h-1zM620 307h1v1h-1zM623 307h2v1h-2zM627 307h2v1h-2zM631 307h1v1h-1zM633 307h1v1h-1zM636 307h2v1h-2zM640 307h1v1h-1zM642 307h1v1h-1zM644 307h2v1h-2zM648 307h1v1h-1zM660 307h1v1h-1zM663 307h1v1h-1zM665 307h1v1h-1zM668 307h2v1h-2zM673 307h1v1h-1zM675 307h1v1h-1zM677 307h1v1h-1zM708 307h1v1h-1zM710 307h1v1h-1zM712 307h1v1h-1zM714 307h2v1h-2zM718 307h2v1h-2zM722 307h1v1h-1zM724 307h1v1h-1zM727 307h1v1h-1zM729 307h1v1h-1zM733 307h2v1h-2zM737 307h2v1h-2zM741 307h2v1h-2zM744 307h2v1h-2zM273 310h12v1h-12zM386 310h1v1h-1zM388 310h1v1h-1zM682 310h17v1h-17zM273 309h1v1h-1zM282 309h1v1h-1zM284 309h1v1h-1zM386 309h1v1h-1zM388 309h1v1h-1zM679 309h3v1h-3zM696 309h3v1h-3zM283 311h1v1h-1zM387 311h1v1h-1zM697 311h1v1h-1zM283 312h1v1h-1zM387 312h1v1h-1zM697 312h1v1h-1z" fill="#00ffff"/>
<path d="M76 573h1v1h-1zM78 573h1v1h-1zM82 573h1v1h-1zM85 573h2v1h-2zM89 573h1v1h-1zM91 573h1v1h-1zM93 573h1v1h-1zM95 573h1v1h-1zM98 573h2v1h-2zM101 573h1v1h-1zM104 573h1v1h-1zM107 573h1v1h-1zM109 573h1v1h-1zM111 573h1v1h-1zM113 573h1v1h-1zM115 573h1v1h-1zM117 573h1v1h-1zM120 573h1v1h-1zM180 573h1v1h-1zM182 573h1v1h-1zM186 573h1v1h-1zM189 573h2v1h-2zM193 573h1v1h-1zM196 573h1v1h-1zM198 573h1v1h-1zM200 573h1v1h-1zM203 573h2v1h-2zM206 573h1v1h-1zM208 573h1v1h-1zM210 573h1v1h-1zM213 573h2v1h-2zM216 573h1v1h-1zM218 573h1v1h-1zM220 573h2v1h-2zM224 573h1v1h-1zM284 573h1v1h-1zM286 573h1v1h-1zM290 573h1v1h-1zM292 573h1v1h-1zM295 573h1v1h-1zM298 573h1v1h-1zM300 573h1v1h-1zM302 573h1v1h-1zM304 573h1v1h-1zM307 573h2v1h-2zM310 573h1v1h-1zM313 573h2v1h-2zM316 573h1v1h-1zM318 573h1v1h-1zM321 573h1v1h-1zM323 573h1v1h-1zM325 573h1v1h-1zM388 573h1v1h-1zM390 573h1v1h-1zM394 573h1v1h-1zM396 573h1v1h-1zM398 573h1v1h-1zM401 573h1v1h-1zM404 573h1v1h-1zM406 573h1v1h-1zM409 573h1v1h-1zM412 573h1v1h-1zM414 573h1v1h-1zM416 573h2v1h-2zM420 573h2v1h-2zM423 573h2v1h-2zM427 573h1v1h-1zM429 573h1v1h-1zM432 573h1v1h-1zM492 573h1v1h-1zM494 573h1v1h-1zM498 573h1v1h-1zM501 573h1v1h-1zM503 573h1v1h-1zM506 573h2v1h-2zM509 573h2v1h-2zM513 573h1v1h-1zM515 573h1v1h-1zM517 573h1v1h-1zM519 573h1v1h-1zM522 573h1v1h-1zM524 573h1v1h-1zM527 573h1v1h-1zM530 573h1v1h-1zM532 573h1v1h-1zM534 573h1v1h-1zM596 573h1v1h-1zM598 573h1v1h-1zM602 573h1v1h-1zM604 573h1v1h-1zM606 573h1v1h-1zM609 573h1v1h-1zM612 573h1v1h-1zM614 573h1v1h-1zM616 573h1v1h-1zM619 573h2v1h-2zM623 573h1v1h-1zM625 573h1v1h-1zM627 573h1v1h-1zM630 573h1v1h-1zM632 573h1v1h-1zM634 573h1v1h-1zM636 573h1v1h-1zM638 573h1v1h-1zM700 573h1v1h-1zM702 573h1v1h-1zM706 573h1v1h-1zM709 573h1v1h-1zM711 573h1v1h-1zM714 573h2v1h-2zM718 573h2v1h-2zM722 573h1v1h-1zM725 573h1v1h-1zM727 573h1v1h-1zM729 573h2v1h-2zM732 573h2v1h-2zM736 573h1v1h-1zM738 573h1v1h-1zM740 573h1v1h-1zM743 573h1v1h-1zM57 521h1v1h-1zM75 521h1v1h-1zM122 521h1v1h-1zM124 521h2v1h-2zM128 521h2v1h-2zM131 521h2v1h-2zM135 521h2v1h-2zM139 521h2v1h-2zM143 521h2v1h-2zM150 521h1v1h-1zM169 521h1v1h-1zM179 521h1v1h-1zM226 521h1v1h-1zM228 521h2v1h-2zM231 521h2v1h-2zM234 521h2v1h-2zM238 521h2v1h-2zM241 521h2v1h-2zM244 521h2v1h-2zM247 521h2v1h-2zM258 521h1v1h-1zM277 521h1v1h-1zM283 521h1v1h-1zM330 521h1v1h-1zM332 521h2v1h-2zM336 521h2v1h-2zM340 521h2v1h-2zM344 521h2v1h-2zM347 521h2v1h-2zM350 521h2v1h-2zM362 521h1v1h-1zM378 521h1v1h-1zM387 521h1v1h-1zM434 521h1v1h-1zM436 521h2v1h-2zM440 521h2v1h-2zM443 521h2v1h-2zM446 521h2v1h-2zM450 521h2v1h-2zM454 521h2v1h-2zM466 521h1v1h-1zM485 521h1v1h-1zM491 521h1v1h-1zM538 521h1v1h-1zM540 521h2v1h-2zM544 521h2v1h-2zM548 521h2v1h-2zM551 521h2v1h-2zM555 521h2v1h-2zM558 521h2v1h-2zM570 521h1v1h-1zM586 521h1v1h-1zM595 521h1v1h-1zM642 521h1v1h-1zM644 521h2v1h-2zM648 521h2v1h-2zM652 521h2v1h-2zM655 521h2v1h-2zM658 521h2v1h-2zM662 521h2v1h-2zM671 521h1v1h-1zM689 521h1v1h-1zM699 521h1v1h-1zM746 521h1v1h-1zM748 521h2v1h-2zM752 521h2v1h-2zM58 517h18v1h-18zM122 517h2v1h-2zM126 517h2v1h-2zM130 517h1v1h-1zM133 517h2v1h-2zM137 517h2v1h-2zM141 517h2v1h-2zM145 517h5v1h-5zM151 517h18v1h-18zM170 517h10v1h-10zM226 517h2v1h-2zM230 517h1v1h-1zM233 517h1v1h-1zM236 517h2v1h-2zM240 517h1v1h-1zM243 517h1v1h-1zM246 517h1v1h-1zM249 517h9v1h-9zM259 517h18v1h-18zM278 517h6v1h-6zM330 517h2v1h-2zM334 517h2v1h-2zM338 517h2v1h-2zM342 517h2v1h-2zM346 517h1v1h-1zM349 517h1v1h-1zM352 517h10v1h-10zM363 517h15v1h-15zM379 517h9v1h-9zM434 517h2v1h-2zM438 517h2v1h-2zM442 517h1v1h-1zM445 517h1v1h-1zM448 517h2v1h-2zM452 517h2v1h-2zM456 517h10v1h-10zM467 517h18v1h-18zM486 517h6v1h-6zM538 517h2v1h-2zM542 517h2v1h-2zM546 517h2v1h-2zM550 517h1v1h-1zM553 517h2v1h-2zM557 517h1v1h-1zM560 517h10v1h-10zM571 517h15v1h-15zM587 517h9v1h-9zM642 517h2v1h-2zM646 517h2v1h-2zM650 517h2v1h-2zM654 517h1v1h-1zM657 517h1v1h-1zM660 517h2v1h-2zM664 517h7v1h-7zM672 517h17v1h-17zM690 517h10v1h-10zM746 517h2v1h-2zM750 517h2v1h-2zM76 553h1v1h-1zM121 553h1v1h-1zM180 553h1v1h-1zM225 553h1v1h-1zM284 553h1v1h-1zM329 553h1v1h-1zM388 553h1v1h-1zM433 553h1v1h-1zM492 553h1v1h-1zM537 553h1v1h-1zM596 553h1v1h-1zM641 553h1v1h-1zM700 553h1v1h-1zM745 553h1v1h-1zM57 520h1v1h-1zM75 520h1v1h-1zM122 520h1v1h-1zM124 520h2v1h-2zM128 520h2v1h-2zM131 520h2v1h-2zM135 520h2v1h-2zM139 520h2v1h-2zM143 520h2v1h-2zM150 520h1v1h-1zM169 520h1v1h-1zM179 520h1v1h-1zM226 520h1v1h-1zM228 520h2v1h-2zM231 520h2v1h-2zM234 520h2v1h-2zM238 520h2v1h-2zM241 520h2v1h-2zM244 520h2v1h-2zM247 520h2v1h-2zM258 520h1v1h-1zM277 520h1v1h-1zM283 520h1v1h-1zM330 520h1v1h-1zM332 520h2v1h-2zM336 520h2v1h-2zM340 520h2v1h-2zM344 520h2v1h-2zM347 520h2v1h-2zM350 520h2v1h-2zM362 520h1v1h-1zM378 520h1v1h-1zM387 520h1v1h-1zM434 520h1v1h-1zM436 520h2v1h-2zM440 520h2v1h-2zM443 520h2v1h-2zM446 520h2v1h-2zM450 520h2v1h-2zM454 520h2v1h-2zM466 520h1v1h-1zM485 520h1v1h-1zM491 520h1v1h-1zM538 520h1v1h-1zM540 520h2v1h-2zM544 520h2v1h-2zM548 520h2v1h-2zM551 520h2v1h-2zM555 520h2v1h-2zM558 520h2v1h-2zM570 520h1v1h-1zM586 520h1v1h-1zM595 520h1v1h-1zM642 520h1v1h-1zM644 520h2v1h-2zM648 520h2v1h-2zM652 520h2v1h-2zM655 520h2v1h-2zM658 520h2v1h-2zM662 520h2v1h-2zM671 520h1v1h-1zM689 520h1v1h-1zM699 520h1v1h-1zM746 520h1v1h-1zM748 520h2v1h-2zM752 520h1v1h-1zM76 575h2v1h-2zM83 575h2v1h-2zM87 575h2v1h-2zM92 575h2v1h-2zM96 575h2v1h-2zM100 575h4v1h-4zM105 575h2v1h-2zM108 575h1v1h-1zM112 575h2v1h-2zM116 575h4v1h-4zM180 575h2v1h-2zM187 575h2v1h-2zM191 575h2v1h-2zM194 575h2v1h-2zM199 575h1v1h-1zM201 575h2v1h-2zM205 575h1v1h-1zM207 575h1v1h-1zM211 575h2v1h-2zM215 575h3v1h-3zM219 575h1v1h-1zM222 575h2v1h-2zM284 575h2v1h-2zM291 575h4v1h-4zM296 575h2v1h-2zM301 575h2v1h-2zM305 575h2v1h-2zM309 575h1v1h-1zM311 575h2v1h-2zM315 575h2v1h-2zM319 575h2v1h-2zM324 575h1v1h-1zM388 575h2v1h-2zM395 575h2v1h-2zM399 575h2v1h-2zM402 575h2v1h-2zM407 575h2v1h-2zM410 575h2v1h-2zM413 575h1v1h-1zM415 575h1v1h-1zM418 575h2v1h-2zM422 575h2v1h-2zM425 575h2v1h-2zM430 575h2v1h-2zM492 575h2v1h-2zM499 575h2v1h-2zM504 575h2v1h-2zM508 575h1v1h-1zM511 575h2v1h-2zM516 575h1v1h-1zM518 575h1v1h-1zM520 575h2v1h-2zM525 575h2v1h-2zM528 575h2v1h-2zM533 575h1v1h-1zM596 575h2v1h-2zM603 575h1v1h-1zM607 575h2v1h-2zM610 575h2v1h-2zM615 575h4v1h-4zM621 575h2v1h-2zM624 575h1v1h-1zM628 575h2v1h-2zM633 575h1v1h-1zM635 575h1v1h-1zM637 575h1v1h-1zM700 575h2v1h-2zM707 575h2v1h-2zM712 575h2v1h-2zM716 575h2v1h-2zM720 575h2v1h-2zM723 575h2v1h-2zM726 575h1v1h-1zM728 575h1v1h-1zM731 575h1v1h-1zM734 575h2v1h-2zM739 575h1v1h-1zM741 575h2v1h-2zM76 560h1v1h-1zM121 560h1v1h-1zM180 560h1v1h-1zM225 560h1v1h-1zM284 560h1v1h-1zM329 560h1v1h-1zM388 560h1v1h-1zM433 560h1v1h-1zM492 560h1v1h-1zM537 560h1v1h-1zM596 560h1v1h-1zM641 560h1v1h-1zM700 560h1v1h-1zM745 560h1v1h-1zM58 518h1v1h-1zM75 518h1v1h-1zM122 518h2v1h-2zM126 518h2v1h-2zM130 518h1v1h-1zM133 518h2v1h-2zM137 518h2v1h-2zM141 518h2v1h-2zM145 518h1v1h-1zM149 518h1v1h-1zM151 518h1v1h-1zM168 518h1v1h-1zM170 518h1v1h-1zM179 518h1v1h-1zM226 518h2v1h-2zM230 518h1v1h-1zM233 518h1v1h-1zM236 518h2v1h-2zM240 518h1v1h-1zM243 518h1v1h-1zM246 518h1v1h-1zM249 518h1v1h-1zM257 518h1v1h-1zM259 518h1v1h-1zM276 518h1v1h-1zM278 518h1v1h-1zM283 518h1v1h-1zM330 518h2v1h-2zM334 518h2v1h-2zM338 518h2v1h-2zM342 518h2v1h-2zM346 518h1v1h-1zM349 518h1v1h-1zM352 518h1v1h-1zM361 518h1v1h-1zM363 518h1v1h-1zM377 518h1v1h-1zM379 518h1v1h-1zM387 518h1v1h-1zM434 518h2v1h-2zM438 518h2v1h-2zM442 518h1v1h-1zM445 518h1v1h-1zM448 518h2v1h-2zM452 518h2v1h-2zM456 518h1v1h-1zM465 518h1v1h-1zM467 518h1v1h-1zM484 518h1v1h-1zM486 518h1v1h-1zM491 518h1v1h-1zM538 518h2v1h-2zM542 518h2v1h-2zM546 518h2v1h-2zM550 518h1v1h-1zM553 518h2v1h-2zM557 518h1v1h-1zM560 518h1v1h-1zM569 518h1v1h-1zM571 518h1v1h-1zM585 518h1v1h-1zM587 518h1v1h-1zM595 518h1v1h-1zM642 518h2v1h-2zM646 518h2v1h-2zM650 518h2v1h-2zM654 518h1v1h-1zM657 518h1v1h-1zM660 518h2v1h-2zM664 518h1v1h-1zM670 518h1v1h-1zM672 518h1v1h-1zM688 518h1v1h-1zM690 518h1v1h-1zM699 518h1v1h-1zM746 518h2v1h-2zM750 518h2v1h-2zM76 572h1v1h-1zM78 572h5v1h-5zM85 572h2v1h-2zM89 572h3v1h-3zM93 572h3v1h-3zM98 572h2v1h-2zM101 572h1v1h-1zM104 572h1v1h-1zM107 572h1v1h-1zM109 572h3v1h-3zM113 572h3v1h-3zM117 572h1v1h-1zM120 572h1v1h-1zM180 572h1v1h-1zM182 572h5v1h-5zM189 572h2v1h-2zM193 572h1v1h-1zM196 572h3v1h-3zM200 572h1v1h-1zM203 572h2v1h-2zM206 572h1v1h-1zM208 572h3v1h-3zM213 572h2v1h-2zM216 572h1v1h-1zM218 572h1v1h-1zM220 572h2v1h-2zM224 572h3v1h-3zM284 572h1v1h-1zM286 572h5v1h-5zM292 572h1v1h-1zM295 572h1v1h-1zM298 572h3v1h-3zM302 572h3v1h-3zM307 572h2v1h-2zM310 572h1v1h-1zM313 572h2v1h-2zM316 572h3v1h-3zM321 572h3v1h-3zM325 572h4v1h-4zM388 572h1v1h-1zM390 572h5v1h-5zM396 572h3v1h-3zM401 572h1v1h-1zM404 572h3v1h-3zM409 572h1v1h-1zM412 572h1v1h-1zM414 572h1v1h-1zM416 572h2v1h-2zM420 572h2v1h-2zM423 572h2v1h-2zM427 572h3v1h-3zM432 572h1v1h-1zM492 572h1v1h-1zM494 572h5v1h-5zM501 572h3v1h-3zM506 572h2v1h-2zM509 572h2v1h-2zM513 572h3v1h-3zM517 572h1v1h-1zM519 572h1v1h-1zM522 572h3v1h-3zM527 572h1v1h-1zM530 572h3v1h-3zM534 572h3v1h-3zM596 572h1v1h-1zM598 572h5v1h-5zM604 572h3v1h-3zM609 572h1v1h-1zM612 572h3v1h-3zM616 572h1v1h-1zM619 572h2v1h-2zM623 572h1v1h-1zM625 572h3v1h-3zM630 572h3v1h-3zM634 572h1v1h-1zM636 572h1v1h-1zM638 572h3v1h-3zM700 572h1v1h-1zM702 572h5v1h-5zM709 572h3v1h-3zM714 572h2v1h-2zM718 572h2v1h-2zM722 572h1v1h-1zM725 572h1v1h-1zM727 572h1v1h-1zM729 572h2v1h-2zM732 572h2v1h-2zM736 572h3v1h-3zM740 572h1v1h-1zM743 572h2v1h-2zM75 529h1v1h-1zM122 529h1v1h-1zM179 529h1v1h-1zM226 529h1v1h-1zM283 529h1v1h-1zM330 529h1v1h-1zM387 529h1v1h-1zM434 529h1v1h-1zM491 529h1v1h-1zM538 529h1v1h-1zM595 529h1v1h-1zM642 529h1v1h-1zM699 529h1v1h-1zM746 529h1v1h-1zM58 519h1v1h-1zM75 519h1v1h-1zM122 519h1v1h-1zM124 519h1v1h-1zM126 519h1v1h-1zM128 519h1v1h-1zM130 519h2v1h-2zM133 519h1v1h-1zM135 519h1v1h-1zM137 519h1v1h-1zM139 519h1v1h-1zM141 519h1v1h-1zM143 519h1v1h-1zM145 519h1v1h-1zM150 519h2v1h-2zM169 519h2v1h-2zM179 519h1v1h-1zM226 519h1v1h-1zM228 519h1v1h-1zM230 519h2v1h-2zM233 519h2v1h-2zM236 519h1v1h-1zM238 519h1v1h-1zM240 519h2v1h-2zM243 519h2v1h-2zM246 519h2v1h-2zM249 519h1v1h-1zM258 519h2v1h-2zM277 519h2v1h-2zM283 519h1v1h-1zM330 519h1v1h-1zM332 519h1v1h-1zM334 519h1v1h-1zM336 519h1v1h-1zM338 519h1v1h-1zM340 519h1v1h-1zM342 519h1v1h-1zM344 519h1v1h-1zM346 519h2v1h-2zM349 519h2v1h-2zM352 519h1v1h-1zM362 519h2v1h-2zM378 519h2v1h-2zM387 519h1v1h-1zM434 519h1v1h-1zM436 519h1v1h-1zM438 519h1v1h-1zM440 519h1v1h-1zM442 519h2v1h-2zM445 519h2v1h-2zM448 519h1v1h-1zM450 519h1v1h-1zM452 519h1v1h-1zM454 519h1v1h-1zM456 519h1v1h-1zM466 519h2v1h-2zM485 519h2v1h-2zM491 519h1v1h-1zM538 519h1v1h-1zM540 519h1v1h-1zM542 519h1v1h-1zM544 519h1v1h-1zM546 519h1v1h-1zM548 519h1v1h-1zM550 519h2v1h-2zM553 519h1v1h-1zM555 519h1v1h-1zM557 519h2v1h-2zM560 519h1v1h-1zM570 519h2v1h-2zM586 519h2v1h-2zM595 519h1v1h-1zM642 519h1v1h-1zM644 519h1v1h-1zM646 519h1v1h-1zM648 519h1v1h-1zM650 519h1v1h-1zM652 519h1v1h-1zM654 519h2v1h-2zM657 519h2v1h-2zM660 519h1v1h-1zM662 519h1v1h-1zM664 519h1v1h-1zM671 519h2v1h-2zM689 519h2v1h-2zM699 519h1v1h-1zM746 519h1v1h-1zM748 519h1v1h-1zM750 519h1v1h-1zM752 519h1v1h-1zM75 524h1v1h-1zM122 524h1v1h-1zM179 524h1v1h-1zM226 524h1v1h-1zM283 524h1v1h-1zM330 524h1v1h-1zM387 524h1v1h-1zM434 524h1v1h-1zM491 524h1v1h-1zM538 524h1v1h-1zM595 524h1v1h-1zM642 524h1v1h-1zM699 524h1v1h-1zM746 524h1v1h-1zM75 536h1v1h-1zM122 536h1v1h-1zM179 536h1v1h-1zM226 536h1v1h-1zM283 536h1v1h-1zM330 536h1v1h-1zM387 536h1v1h-1zM434 536h1v1h-1zM491 536h1v1h-1zM538 536h1v1h-1zM595 536h1v1h-1zM642 536h1v1h-1zM699 536h1v1h-1zM746 536h1v1h-1zM75 535h1v1h-1zM122 535h1v1h-1zM179 535h1v1h-1zM226 535h1v1h-1zM283 535h1v1h-1zM330 535h1v1h-1zM387 535h1v1h-1zM434 535h1v1h-1zM491 535h1v1h-1zM538 535h1v1h-1zM595 535h1v1h-1zM642 535h1v1h-1zM699 535h1v1h-1zM746 535h1v1h-1zM76 559h1v1h-1zM121 559h1v1h-1zM180 559h1v1h-1zM225 559h1v1h-1zM284 559h1v1h-1zM329 559h1v1h-1zM388 559h1v1h-1zM433 559h1v1h-1zM492 559h1v1h-1zM537 559h1v1h-1zM596 559h1v1h-1zM641 559h1v1h-1zM700 559h1v1h-1zM745 559h1v1h-1zM76 576h2v1h-2zM83 576h2v1h-2zM87 576h1v1h-1zM92 576h2v1h-2zM96 576h1v1h-1zM100 576h4v1h-4zM105 576h1v1h-1zM108 576h1v1h-1zM112 576h2v1h-2zM116 576h4v1h-4zM180 576h2v1h-2zM187 576h1v1h-1zM191 576h1v1h-1zM194 576h2v1h-2zM199 576h1v1h-1zM201 576h1v1h-1zM205 576h1v1h-1zM207 576h1v1h-1zM211 576h1v1h-1zM215 576h3v1h-3zM219 576h1v1h-1zM222 576h2v1h-2zM284 576h2v1h-2zM291 576h4v1h-4zM296 576h1v1h-1zM301 576h2v1h-2zM305 576h1v1h-1zM309 576h1v1h-1zM311 576h2v1h-2zM315 576h2v1h-2zM319 576h1v1h-1zM324 576h1v1h-1zM388 576h2v1h-2zM395 576h2v1h-2zM399 576h2v1h-2zM402 576h1v1h-1zM407 576h1v1h-1zM410 576h2v1h-2zM413 576h1v1h-1zM415 576h1v1h-1zM418 576h2v1h-2zM422 576h2v1h-2zM425 576h2v1h-2zM430 576h1v1h-1zM492 576h2v1h-2zM499 576h1v1h-1zM504 576h2v1h-2zM508 576h1v1h-1zM511 576h1v1h-1zM516 576h1v1h-1zM518 576h1v1h-1zM520 576h2v1h-2zM525 576h1v1h-1zM528 576h2v1h-2zM533 576h1v1h-1zM596 576h2v1h-2zM603 576h1v1h-1zM607 576h2v1h-2zM610 576h1v1h-1zM615 576h3v1h-3zM621 576h1v1h-1zM624 576h1v1h-1zM628 576h2v1h-2zM633 576h1v1h-1zM635 576h1v1h-1zM637 576h1v1h-1zM700 576h2v1h-2zM707 576h2v1h-2zM712 576h2v1h-2zM716 576h1v1h-1zM720 576h2v1h-2zM723 576h1v1h-1zM726 576h1v1h-1zM728 576h1v1h-1zM731 576h1v1h-1zM734 576h2v1h-2zM739 576h1v1h-1zM741 576h1v1h-1zM75 532h1v1h-1zM122 532h1v1h-1zM179 532h1v1h-1zM226 532h1v1h-1zM283 532h1v1h-1zM330 532h1v1h-1zM387 532h1v1h-1zM434 532h1v1h-1zM491 532h1v1h-1zM538 532h1v1h-1zM595 532h1v1h-1zM642 532h1v1h-1zM699 532h1v1h-1zM746 532h1v1h-1zM76 574h1v1h-1zM78 574h1v1h-1zM83 574h1v1h-1zM85 574h1v1h-1zM87 574h2v1h-2zM92 574h2v1h-2zM96 574h2v1h-2zM100 574h3v1h-3zM104 574h3v1h-3zM108 574h2v1h-2zM112 574h2v1h-2zM116 574h3v1h-3zM120 574h1v1h-1zM180 574h1v1h-1zM182 574h1v1h-1zM187 574h2v1h-2zM191 574h2v1h-2zM194 574h1v1h-1zM196 574h1v1h-1zM199 574h4v1h-4zM205 574h4v1h-4zM211 574h2v1h-2zM215 574h6v1h-6zM222 574h1v1h-1zM224 574h1v1h-1zM284 574h1v1h-1zM286 574h1v1h-1zM291 574h3v1h-3zM295 574h3v1h-3zM301 574h2v1h-2zM305 574h2v1h-2zM309 574h3v1h-3zM313 574h1v1h-1zM315 574h2v1h-2zM319 574h2v1h-2zM324 574h2v1h-2zM388 574h1v1h-1zM390 574h1v1h-1zM395 574h2v1h-2zM399 574h1v1h-1zM401 574h3v1h-3zM407 574h2v1h-2zM410 574h1v1h-1zM412 574h5v1h-5zM418 574h1v1h-1zM420 574h1v1h-1zM422 574h2v1h-2zM425 574h1v1h-1zM427 574h1v1h-1zM430 574h2v1h-2zM492 574h1v1h-1zM494 574h1v1h-1zM499 574h2v1h-2zM504 574h1v1h-1zM506 574h1v1h-1zM508 574h2v1h-2zM511 574h2v1h-2zM516 574h5v1h-5zM522 574h1v1h-1zM525 574h2v1h-2zM528 574h1v1h-1zM530 574h1v1h-1zM533 574h2v1h-2zM596 574h1v1h-1zM598 574h1v1h-1zM603 574h2v1h-2zM607 574h1v1h-1zM609 574h3v1h-3zM615 574h4v1h-4zM621 574h2v1h-2zM624 574h2v1h-2zM628 574h1v1h-1zM630 574h1v1h-1zM633 574h6v1h-6zM700 574h1v1h-1zM702 574h1v1h-1zM707 574h1v1h-1zM709 574h1v1h-1zM712 574h1v1h-1zM714 574h1v1h-1zM716 574h2v1h-2zM720 574h1v1h-1zM722 574h3v1h-3zM726 574h4v1h-4zM731 574h2v1h-2zM734 574h1v1h-1zM736 574h1v1h-1zM739 574h4v1h-4zM76 571h1v1h-1zM120 571h1v1h-1zM180 571h1v1h-1zM224 571h1v1h-1zM284 571h1v1h-1zM328 571h1v1h-1zM388 571h1v1h-1zM432 571h1v1h-1zM492 571h1v1h-1zM536 571h1v1h-1zM596 571h1v1h-1zM640 571h1v1h-1zM700 571h1v1h-1zM744 571h1v1h-1zM76 566h1v1h-1zM121 566h1v1h-1zM180 566h1v1h-1zM225 566h1v1h-1zM284 566h1v1h-1zM329 566h1v1h-1zM388 566h1v1h-1zM433 566h1v1h-1zM492 566h1v1h-1zM537 566h1v1h-1zM596 566h1v1h-1zM641 566h1v1h-1zM700 566h1v1h-1zM745 566h1v1h-1zM75 531h1v1h-1zM122 531h1v1h-1zM179 531h1v1h-1zM226 531h1v1h-1zM283 531h1v1h-1zM330 531h1v1h-1zM387 531h1v1h-1zM434 531h1v1h-1zM491 531h1v1h-1zM538 531h1v1h-1zM595 531h1v1h-1zM642 531h1v1h-1zM699 531h1v1h-1zM746 531h1v1h-1zM75 541h1v1h-1zM121 541h1v1h-1zM179 541h1v1h-1zM225 541h1v1h-1zM283 541h1v1h-1zM329 541h1v1h-1zM387 541h1v1h-1zM433 541h1v1h-1zM491 541h1v1h-1zM537 541h1v1h-1zM595 541h1v1h-1zM641 541h1v1h-1zM699 541h1v1h-1zM745 541h1v1h-1zM76 565h1v1h-1zM121 565h1v1h-1zM180 565h1v1h-1zM225 565h1v1h-1zM284 565h1v1h-1zM329 565h1v1h-1zM388 565h1v1h-1zM433 565h1v1h-1zM492 565h1v1h-1zM537 565h1v1h-1zM596 565h1v1h-1zM641 565h1v1h-1zM700 565h1v1h-1zM745 565h1v1h-1zM76 544h1v1h-1zM121 544h1v1h-1zM180 544h1v1h-1zM225 544h1v1h-1zM284 544h1v1h-1zM329 544h1v1h-1zM388 544h1v1h-1zM433 544h1v1h-1zM492 544h1v1h-1zM537 544h1v1h-1zM596 544h1v1h-1zM641 544h1v1h-1zM700 544h1v1h-1zM745 544h1v1h-1zM75 537h1v1h-1zM122 537h1v1h-1zM179 537h1v1h-1zM226 537h1v1h-1zM283 537h1v1h-1zM330 537h1v1h-1zM387 537h1v1h-1zM434 537h1v1h-1zM491 537h1v1h-1zM538 537h1v1h-1zM595 537h1v1h-1zM642 537h1v1h-1zM699 537h1v1h-1zM746 537h1v1h-1zM76 543h1v1h-1zM121 543h1v1h-1zM180 543h1v1h-1zM225 543h1v1h-1zM284 543h1v1h-1zM329 543h1v1h-1zM388 543h1v1h-1zM433 543h1v1h-1zM492 543h1v1h-1zM537 543h1v1h-1zM596 543h1v1h-1zM641 543h1v1h-1zM700 543h1v1h-1zM745 543h1v1h-1zM76 542h1v1h-1zM121 542h1v1h-1zM180 542h1v1h-1zM225 542h1v1h-1zM284 542h1v1h-1zM329 542h1v1h-1zM388 542h1v1h-1zM433 542h1v1h-1zM492 542h1v1h-1zM537 542h1v1h-1zM596 542h1v1h-1zM641 542h1v1h-1zM700 542h1v1h-1zM745 542h1v1h-1zM75 526h1v1h-1zM122 526h1v1h-1zM179 526h1v1h-1zM226 526h1v1h-1zM283 526h1v1h-1zM330 526h1v1h-1zM387 526h1v1h-1zM434 526h1v1h-1zM491 526h1v1h-1zM538 526h1v1h-1zM595 526h1v1h-1zM642 526h1v1h-1zM699 526h1v1h-1zM746 526h1v1h-1zM122 514h1v1h-1zM226 514h1v1h-1zM330 514h1v1h-1zM434 514h1v1h-1zM538 514h1v1h-1zM642 514h1v1h-1zM746 514h1v1h-1zM75 525h1v1h-1zM122 525h1v1h-1zM179 525h1v1h-1zM226 525h1v1h-1zM283 525h1v1h-1zM330 525h1v1h-1zM387 525h1v1h-1zM434 525h1v1h-1zM491 525h1v1h-1zM538 525h1v1h-1zM595 525h1v1h-1zM642 525h1v1h-1zM699 525h1v1h-1zM746 525h1v1h-1zM76 578h2v1h-2zM180 578h2v1h-2zM284 578h2v1h-2zM388 578h2v1h-2zM492 578h2v1h-2zM596 578h2v1h-2zM700 578h2v1h-2zM76 549h1v1h-1zM121 549h1v1h-1zM180 549h1v1h-1zM225 549h1v1h-1zM284 549h1v1h-1zM329 549h1v1h-1zM388 549h1v1h-1zM433 549h1v1h-1zM492 549h1v1h-1zM537 549h1v1h-1zM596 549h1v1h-1zM641 549h1v1h-1zM700 549h1v1h-1zM745 549h1v1h-1zM76 577h2v1h-2zM180 577h2v1h-2zM284 577h2v1h-2zM388 577h2v1h-2zM492 577h2v1h-2zM596 577h2v1h-2zM700 577h2v1h-2zM75 522h1v1h-1zM122 522h1v1h-1zM179 522h1v1h-1zM226 522h1v1h-1zM283 522h1v1h-1zM330 522h1v1h-1zM387 522h1v1h-1zM434 522h1v1h-1zM491 522h1v1h-1zM538 522h1v1h-1zM595 522h1v1h-1zM642 522h1v1h-1zM699 522h1v1h-1zM746 522h1v1h-1zM76 556h1v1h-1zM121 556h1v1h-1zM180 556h1v1h-1zM225 556h1v1h-1zM284 556h1v1h-1zM329 556h1v1h-1zM388 556h1v1h-1zM433 556h1v1h-1zM492 556h1v1h-1zM537 556h1v1h-1zM596 556h1v1h-1zM641 556h1v1h-1zM700 556h1v1h-1zM745 556h1v1h-1zM76 555h1v1h-1zM121 555h1v1h-1zM180 555h1v1h-1zM225 555h1v1h-1zM284 555h1v1h-1zM329 555h1v1h-1zM388 555h1v1h-1zM433 555h1v1h-1zM492 555h1v1h-1zM537 555h1v1h-1zM596 555h1v1h-1zM641 555h1v1h-1zM700 555h1v1h-1zM745 555h1v1h-1zM76 554h1v1h-1zM121 554h1v1h-1zM180 554h1v1h-1zM225 554h1v1h-1zM284 554h1v1h-1zM329 554h1v1h-1zM388 554h1v1h-1zM433 554h1v1h-1zM492 554h1v1h-1zM537 554h1v1h-1zM596 554h1v1h-1zM641 554h1v1h-1zM700 554h1v1h-1zM745 554h1v1h-1zM76 562h1v1h-1zM121 562h1v1h-1zM180 562h1v1h-1zM225 562h1v1h-1zM284 562h1v1h-1zM329 562h1v1h-1zM388 562h1v1h-1zM433 562h1v1h-1zM492 562h1v1h-1zM537 562h1v1h-1zM596 562h1v1h-1zM641 562h1v1h-1zM700 562h1v1h-1zM745 562h1v1h-1zM75 527h1v1h-1zM122 527h1v1h-1zM179 527h1v1h-1zM226 527h1v1h-1zM283 527h1v1h-1zM330 527h1v1h-1zM387 527h1v1h-1zM434 527h1v1h-1zM491 527h1v1h-1zM538 527h1v1h-1zM595 527h1v1h-1zM642 527h1v1h-1zM699 527h1v1h-1zM746 527h1v1h-1zM76 561h1v1h-1zM121 561h1v1h-1zM180 561h1v1h-1zM225 561h1v1h-1zM284 561h1v1h-1zM329 561h1v1h-1zM388 561h1v1h-1zM433 561h1v1h-1zM492 561h1v1h-1zM537 561h1v1h-1zM596 561h1v1h-1zM641 561h1v1h-1zM700 561h1v1h-1zM745 561h1v1h-1zM75 539h1v1h-1zM121 539h1v1h-1zM179 539h1v1h-1zM225 539h1v1h-1zM283 539h1v1h-1zM329 539h1v1h-1zM387 539h1v1h-1zM433 539h1v1h-1zM491 539h1v1h-1zM537 539h1v1h-1zM595 539h1v1h-1zM641 539h1v1h-1zM699 539h1v1h-1zM745 539h1v1h-1zM76 567h1v1h-1zM120 567h1v1h-1zM180 567h1v1h-1zM224 567h1v1h-1zM284 567h1v1h-1zM328 567h1v1h-1zM388 567h1v1h-1zM432 567h1v1h-1zM492 567h1v1h-1zM536 567h1v1h-1zM596 567h1v1h-1zM640 567h1v1h-1zM700 567h1v1h-1zM744 567h1v1h-1zM76 546h1v1h-1zM121 546h1v1h-1zM180 546h1v1h-1zM225 546h1v1h-1zM284 546h1v1h-1zM329 546h1v1h-1zM388 546h1v1h-1zM433 546h1v1h-1zM492 546h1v1h-1zM537 546h1v1h-1zM596 546h1v1h-1zM641 546h1v1h-1zM700 546h1v1h-1zM745 546h1v1h-1zM76 545h1v1h-1zM121 545h1v1h-1zM180 545h1v1h-1zM225 545h1v1h-1zM284 545h1v1h-1zM329 545h1v1h-1zM388 545h1v1h-1zM433 545h1v1h-1zM492 545h1v1h-1zM537 545h1v1h-1zM596 545h1v1h-1zM641 545h1v1h-1zM700 545h1v1h-1zM745 545h1v1h-1zM76 579h1v1h-1zM180 579h1v1h-1zM284 579h1v1h-1zM388 579h1v1h-1zM492 579h1v1h-1zM596 579h1v1h-1zM700 579h1v1h-1zM76 552h1v1h-1zM121 552h1v1h-1zM180 552h1v1h-1zM225 552h1v1h-1zM284 552h1v1h-1zM329 552h1v1h-1zM388 552h1v1h-1zM433 552h1v1h-1zM492 552h1v1h-1zM537 552h1v1h-1zM596 552h1v1h-1zM641 552h1v1h-1zM700 552h1v1h-1zM745 552h1v1h-1zM76 551h1v1h-1zM121 551h1v1h-1zM180 551h1v1h-1zM225 551h1v1h-1zM284 551h1v1h-1zM329 551h1v1h-1zM388 551h1v1h-1zM433 551h1v1h-1zM492 551h1v1h-1zM537 551h1v1h-1zM596 551h1v1h-1zM641 551h1v1h-1zM700 551h1v1h-1zM745 551h1v1h-1zM76 550h1v1h-1zM121 550h1v1h-1zM180 550h1v1h-1zM225 550h1v1h-1zM284 550h1v1h-1zM329 550h1v1h-1zM388 550h1v1h-1zM433 550h1v1h-1zM492 550h1v1h-1zM537 550h1v1h-1zM596 550h1v1h-1zM641 550h1v1h-1zM700 550h1v1h-1zM745 550h1v1h-1zM75 534h1v1h-1zM122 534h1v1h-1zM179 534h1v1h-1zM226 534h1v1h-1zM283 534h1v1h-1zM330 534h1v1h-1zM387 534h1v1h-1zM434 534h1v1h-1zM491 534h1v1h-1zM538 534h1v1h-1zM595 534h1v1h-1zM642 534h1v1h-1zM699 534h1v1h-1zM746 534h1v1h-1zM75 523h1v1h-1zM122 523h1v1h-1zM179 523h1v1h-1zM226 523h1v1h-1zM283 523h1v1h-1zM330 523h1v1h-1zM387 523h1v1h-1zM434 523h1v1h-1zM491 523h1v1h-1zM538 523h1v1h-1zM595 523h1v1h-1zM642 523h1v1h-1zM699 523h1v1h-1zM746 523h1v1h-1zM75 533h1v1h-1zM122 533h1v1h-1zM179 533h1v1h-1zM226 533h1v1h-1zM283 533h1v1h-1zM330 533h1v1h-1zM387 533h1v1h-1zM434 533h1v1h-1zM491 533h1v1h-1zM538 533h1v1h-1zM595 533h1v1h-1zM642 533h1v1h-1zM699 533h1v1h-1zM746 533h1v1h-1zM76 557h1v1h-1zM121 557h1v1h-1zM180 557h1v1h-1zM225 557h1v1h-1zM284 557h1v1h-1zM329 557h1v1h-1zM388 557h1v1h-1zM433 557h1v1h-1zM492 557h1v1h-1zM537 557h1v1h-1zM596 557h1v1h-1zM641 557h1v1h-1zM700 557h1v1h-1zM745 557h1v1h-1zM75 530h1v1h-1zM122 530h1v1h-1zM179 530h1v1h-1zM226 530h1v1h-1zM283 530h1v1h-1zM330 530h1v1h-1zM387 530h1v1h-1zM434 530h1v1h-1zM491 530h1v1h-1zM538 530h1v1h-1zM595 530h1v1h-1zM642 530h1v1h-1zM699 530h1v1h-1zM746 530h1v1h-1zM76 563h1v1h-1zM121 563h1v1h-1zM180 563h1v1h-1zM225 563h1v1h-1zM284 563h1v1h-1zM329 563h1v1h-1zM388 563h1v1h-1zM433 563h1v1h-1zM492 563h1v1h-1zM537 563h1v1h-1zM596 563h1v1h-1zM641 563h1v1h-1zM700 563h1v1h-1zM745 563h1v1h-1zM76 569h1v1h-1zM120 569h1v1h-1zM180 569h1v1h-1zM224 569h1v1h-1zM284 569h1v1h-1zM328 569h1v1h-1zM388 569h1v1h-1zM432 569h1v1h-1zM492 569h1v1h-1zM536 569h1v1h-1zM596 569h1v1h-1zM640 569h1v1h-1zM700 569h1v1h-1zM744 569h1v1h-1zM76 564h1v1h-1zM121 564h1v1h-1zM180 564h1v1h-1zM225 564h1v1h-1zM284 564h1v1h-1zM329 564h1v1h-1zM388 564h1v1h-1zM433 564h1v1h-1zM492 564h1v1h-1zM537 564h1v1h-1zM596 564h1v1h-1zM641 564h1v1h-1zM700 564h1v1h-1zM745 564h1v1h-1zM122 516h2v1h-2zM226 516h2v1h-2zM330 516h2v1h-2zM434 516h2v1h-2zM538 516h2v1h-2zM642 516h2v1h-2zM746 516h2v1h-2zM122 513h1v1h-1zM226 513h1v1h-1zM330 513h1v1h-1zM434 513h1v1h-1zM538 513h1v1h-1zM642 513h1v1h-1zM746 513h1v1h-1zM76 547h1v1h-1zM121 547h1v1h-1zM180 547h1v1h-1zM225 547h1v1h-1zM284 547h1v1h-1zM329 547h1v1h-1zM388 547h1v1h-1zM433 547h1v1h-1zM492 547h1v1h-1zM537 547h1v1h-1zM596 547h1v1h-1zM641 547h1v1h-1zM700 547h1v1h-1zM745 547h1v1h-1zM76 558h1v1h-1zM121 558h1v1h-1zM180 558h1v1h-1zM225 558h1v1h-1zM284 558h1v1h-1zM329 558h1v1h-1zM388 558h1v1h-1zM433 558h1v1h-1zM492 558h1v1h-1zM537 558h1v1h-1zM596 558h1v1h-1zM641 558h1v1h-1zM700 558h1v1h-1zM745 558h1v1h-1zM122 515h2v1h-2zM226 515h2v1h-2zM330 515h2v1h-2zM434 515h2v1h-2zM538 515h2v1h-2zM642 515h2v1h-2zM746 515h2v1h-2zM76 548h1v1h-1zM121 548h1v1h-1zM180 548h1v1h-1zM225 548h1v1h-1zM284 548h1v1h-1zM329 548h1v1h-1zM388 548h1v1h-1zM433 548h1v1h-1zM492 548h1v1h-1zM537 548h1v1h-1zM596 548h1v1h-1zM641 548h1v1h-1zM700 548h1v1h-1zM745 548h1v1h-1zM75 538h1v1h-1zM121 538h1v1h-1zM179 538h1v1h-1zM225 538h1v1h-1zM283 538h1v1h-1zM329 538h1v1h-1zM387 538h1v1h-1zM433 538h1v1h-1zM491 538h1v1h-1zM537 538h1v1h-1zM595 538h1v1h-1zM641 538h1v1h-1zM699 538h1v1h-1zM745 538h1v1h-1zM76 568h1v1h-1zM120 568h1v1h-1zM180 568h1v1h-1zM224 568h1v1h-1zM284 568h1v1h-1zM328 568h1v1h-1zM388 568h1v1h-1zM432 568h1v1h-1zM492 568h1v1h-1zM536 568h1v1h-1zM596 568h1v1h-1zM640 568h1v1h-1zM700 568h1v1h-1zM744 568h1v1h-1zM76 570h1v1h-1zM120 570h1v1h-1zM180 570h1v1h-1zM224 570h1v1h-1zM284 570h1v1h-1zM328 570h1v1h-1zM388 570h1v1h-1zM432 570h1v1h-1zM492 570h1v1h-1zM536 570h1v1h-1zM596 570h1v1h-1zM640 570h1v1h-1zM700 570h1v1h-1zM744 570h1v1h-1zM76 580h1v1h-1zM180 580h1v1h-1zM284 580h1v1h-1zM388 580h1v1h-1zM492 580h1v1h-1zM596 580h1v1h-1zM700 580h1v1h-1zM75 540h1v1h-1zM121 540h1v1h-1zM179 540h1v1h-1zM225 540h1v1h-1zM283 540h1v1h-1zM329 540h1v1h-1zM387 540h1v1h-1zM433 540h1v1h-1zM491 540h1v1h-1zM537 540h1v1h-1zM595 540h1v1h-1zM641 540h1v1h-1zM699 540h1v1h-1zM745 540h1v1h-1zM75 528h1v1h-1zM122 528h1v1h-1zM179 528h1v1h-1zM226 528h1v1h-1zM283 528h1v1h-1zM330 528h1v1h-1zM387 528h1v1h-1zM434 528h1v1h-1zM491 528h1v1h-1zM538 528h1v1h-1zM595 528h1v1h-1zM642 528h1v1h-1zM699 528h1v1h-1zM746 528h1v1h-1z" fill="#ffff00"/>
<path d="M22.5 365.5 H48 L56 373.5 L48 381.5 H22.5 Z" fill="#00ffff" stroke="#2a1a1a" stroke-width="1" shape-rendering="auto"/>
<path d="M22.5 569.5 H48 L56 577.5 L48 585.5 H22.5 Z" fill="#ffff00" stroke="#2a1a1a" stroke-width="1" shape-rendering="auto"/>
<g fill="#2a2020"><rect x="759" y="299" width="16" height="15"/><rect x="759" y="300" width="16" height="1"/><rect x="758" y="301" width="17" height="1"/><rect x="757" y="302" width="18" height="1"/><rect x="757" y="303" width="18" height="1"/><rect x="756" y="304" width="19" height="1"/><rect x="756" y="305" width="19" height="1"/><rect x="755" y="306" width="20" height="1"/><rect x="756" y="307" width="19" height="1"/><rect x="756" y="308" width="19" height="1"/><rect x="757" y="309" width="18" height="1"/><rect x="757" y="310" width="18" height="1"/><rect x="758" y="311" width="17" height="1"/><rect x="759" y="312" width="16" height="1"/></g>
<g fill="#00ffff"><rect x="760" y="300" width="14" height="1"/><rect x="759" y="301" width="15" height="1"/><rect x="758" y="302" width="16" height="1"/><rect x="758" y="303" width="16" height="1"/><rect x="757" y="304" width="17" height="1"/><rect x="757" y="305" width="17" height="1"/><rect x="756" y="306" width="18" height="1"/><rect x="757" y="307" width="17" height="1"/><rect x="757" y="308" width="17" height="1"/><rect x="758" y="309" width="16" height="1"/><rect x="758" y="310" width="16" height="1"/><rect x="759" y="311" width="15" height="1"/><rect x="760" y="312" width="14" height="1"/></g>
<g fill="#222"><rect x="759" y="306" width="13" height="1"/><rect x="771" y="302" width="1" height="8"/></g>
<g fill="#2a2530"><rect x="398" y="136" width="15" height="15"/><rect x="400" y="151" width="11" height="1"/><rect x="402" y="152" width="7" height="1"/><rect x="403" y="153" width="5" height="1"/></g>
<g fill="#ffff00"><rect x="399" y="137" width="13" height="14"/><rect x="401" y="151" width="9" height="1"/><rect x="403" y="152" width="5" height="1"/><rect x="404" y="153" width="3" height="1"/></g>
<g fill="#1a1a1a"><rect x="401" y="139" width="8" height="1"/><rect x="405" y="139" width="1" height="12"/></g>
<g fill="#2a2530"><rect x="398" y="192" width="15" height="15"/><rect x="400" y="207" width="11" height="1"/><rect x="402" y="208" width="7" height="1"/><rect x="403" y="209" width="5" height="1"/></g>
<g fill="#ffff00"><rect x="399" y="193" width="13" height="14"/><rect x="401" y="207" width="9" height="1"/><rect x="403" y="208" width="5" height="1"/><rect x="404" y="209" width="3" height="1"/></g>
<g fill="#1a1a1a"><rect x="401" y="195" width="8" height="1"/><rect x="405" y="195" width="1" height="12"/></g>
<rect x="13.5" y="633.5" width="119" height="55" fill="none" stroke="#1f9a86" stroke-width="1"/>
<rect x="17" y="637" width="112" height="48" fill="#2d3030"/>
<rect x="138.5" y="633.5" width="119" height="55" fill="none" stroke="#1f9a86" stroke-width="1"/>
<rect x="142" y="637" width="112" height="48" fill="#2d3030"/>
<rect x="677.5" y="633.5" width="119" height="55" fill="none" stroke="#1f9a86" stroke-width="1"/>
<rect x="681" y="637" width="112" height="48" fill="#2d3030"/>
<rect x="13.5" y="697.5" width="784" height="39" fill="none" stroke="#1f9a86" stroke-width="1"/>
<rect x="17" y="701" width="777" height="32" fill="#2d3030"/>
</svg>
<div class="a sf" style="left:17px;top:638px;font-size:14px;line-height:16px;color:#ffff00">CH1</div>
<div class="a sf" style="right:893px;top:638px;font-size:14px;line-height:16px;color:#ffff00">X10&nbsp;&nbsp;DC</div>
<div class="a sf" style="right:893px;top:654px;font-size:14px;line-height:16px;color:#ffff00">5 V/div</div>
<div class="a sf" style="right:893px;top:670px;font-size:14px;line-height:16px;color:#ffff00">-19.88 V</div>
<div class="a sf" style="left:142px;top:638px;font-size:14px;line-height:16px;color:#00ffff">CH2</div>
<div class="a sf" style="right:768px;top:638px;font-size:14px;line-height:16px;color:#00ffff">X10&nbsp;&nbsp;DC</div>
<div class="a sf" style="right:768px;top:654px;font-size:14px;line-height:16px;color:#00ffff">2 V/div</div>
<div class="a sf" style="right:768px;top:670px;font-size:14px;line-height:16px;color:#00ffff">2.00 V</div>
<div class="a sf" style="left:682px;top:638px;font-size:14px;line-height:16px;color:#ffff00">Time</div>
<div class="a sf" style="right:229px;top:654px;font-size:14px;line-height:16px;color:#ffff00">10 us/div</div>
<div class="a sf" style="left:682px;top:670px;font-size:14px;line-height:16px;color:#ffff00">1MB</div>
<div class="a sf" style="right:229px;top:670px;font-size:14px;line-height:16px;color:#ffff00">8 MSa/s</div>
<div class="a sf" style="left:17px;top:702px;font-size:14px;line-height:16px;color:#ffff00">Vmin= -389.455 mV</div>
<div class="a sf" style="left:161px;top:702px;font-size:14px;line-height:16px;color:#ffff00">Vmax= 7.656 V</div>
<div class="a sf" style="left:305px;top:702px;font-size:14px;line-height:16px;color:#ffff00">Vpp= 8.046 V</div>
<div class="a sf" style="left:449px;top:702px;font-size:14px;line-height:16px;color:#ffff00">F= 67.227 KHz</div>
<div class="a sf" style="left:17px;top:718px;font-size:14px;line-height:16px;color:#00ffff">Vmin= 2.845 V</div>
<div class="a sf" style="left:161px;top:718px;font-size:14px;line-height:16px;color:#00ffff">Vmax= 3.384 V</div>
<div class="a sf" style="left:305px;top:718px;font-size:14px;line-height:16px;color:#00ffff">Vpp= 539.419 mV</div>
<div class="a sf" style="left:449px;top:718px;font-size:14px;line-height:16px;color:#00ffff">F= 0.000 Hz</div>
<div class="a sf" style="left:24px;top:367px;font-size:11px;line-height:14px;color:#1a1a1a">CH2</div>
<div class="a sf" style="left:24px;top:571px;font-size:11px;line-height:14px;color:#1a1a1a">CH1</div>
<div class="gb" style="left:808px;top:116px;width:209px;height:32px"></div>
<div class="btn" style="left:831px;top:122px;width:58px;height:21px;line-height:19px">Auto</div>
<div class="btn" style="left:938px;top:122px;width:55px;height:21px;line-height:19px">Pause</div>
<div class="gb" style="left:808px;top:153px;width:209px;height:82px"></div>
<div class="gb" style="left:808px;top:238px;width:209px;height:81px"></div>
<div class="gb" style="left:808px;top:324px;width:209px;height:91px"></div>
<div class="gb" style="left:808px;top:433px;width:209px;height:251px"></div>
<div class="btn" style="left:812px;top:157px;width:51px;height:21px;border-color:#e2e2e2;background:#f3f3f3"></div>
<svg class="a" style="left:817px;top:159px" width="17" height="17" viewBox="0 0 17 17"><defs><radialGradient id="led157" cx="0.4" cy="0.35" r="0.7"><stop offset="0" stop-color="#80ff80"/><stop offset="0.45" stop-color="#00f000"/><stop offset="1" stop-color="#00c800"/></radialGradient></defs><circle cx="8.5" cy="8.5" r="7.3" fill="url(#led157)" stroke="#111" stroke-width="1.4"/><path d="M5.5 9 L9 5.5" stroke="#fff" stroke-width="1.4" stroke-linecap="round"/></svg>
<div class="lab" style="left:835.5px;top:160px;font-size:11.5px;line-height:14px;letter-spacing:-0.3px">CH1</div>
<div class="btn" style="left:812px;top:241px;width:51px;height:21px;border-color:#e2e2e2;background:#f3f3f3"></div>
<svg class="a" style="left:817px;top:243px" width="17" height="17" viewBox="0 0 17 17"><defs><radialGradient id="led241" cx="0.4" cy="0.35" r="0.7"><stop offset="0" stop-color="#80ff80"/><stop offset="0.45" stop-color="#00f000"/><stop offset="1" stop-color="#00c800"/></radialGradient></defs><circle cx="8.5" cy="8.5" r="7.3" fill="url(#led241)" stroke="#111" stroke-width="1.4"/><path d="M5.5 9 L9 5.5" stroke="#fff" stroke-width="1.4" stroke-linecap="round"/></svg>
<div class="lab" style="left:835.5px;top:244px;font-size:11.5px;line-height:14px;letter-spacing:-0.3px">CH2</div>
<div class="cmb" style="left:811px;top:183px;width:53px;height:21px;background:#f2f7fd;border-color:#3f7cc4;font-size:11px;line-height:19px;padding-left:3px;padding-top:1px">X10</div>
<svg class="a" style="left:848px;top:190px" width="10" height="6"><path d="M1 1 L5 5 L9 1" stroke="#666" stroke-width="1" fill="none"/></svg>
<div class="cmb" style="left:811px;top:268px;width:53px;height:21px;background:#b4b7be;border-color:#3f7cc4;font-size:11px;line-height:19px;padding-left:3px;padding-top:1px">X10</div>
<svg class="a" style="left:848px;top:275px" width="10" height="6"><path d="M1 1 L5 5 L9 1" stroke="#666" stroke-width="1" fill="none"/></svg>
<div class="btn" style="left:812px;top:212px;width:51px;height:21px;line-height:19px;text-align:left;padding-left:3px;font-size:10.8px">More</div>
<svg class="a" style="left:847px;top:221px" width="10" height="6"><path d="M0 0 H9 L4.5 5 Z" fill="#4f7cbf"/></svg>
<div class="btn" style="left:812px;top:298px;width:51px;height:21px;line-height:19px;text-align:left;padding-left:3px;font-size:10.8px">More</div>
<svg class="a" style="left:847px;top:307px" width="10" height="6"><path d="M0 0 H9 L4.5 5 Z" fill="#4f7cbf"/></svg>
<div class="btn" style="left:812px;top:386px;width:51px;height:21px;line-height:19px;text-align:left;padding-left:3px;font-size:10.8px">More</div>
<svg class="a" style="left:847px;top:395px" width="10" height="6"><path d="M0 0 H9 L4.5 5 Z" fill="#4f7cbf"/></svg>
<svg class="a" style="left:914.3px;top:159.6px" width="80" height="80" viewBox="914.3 159.6 80 80"><defs><linearGradient id="kn199.6" x1="0.85" y1="0.1" x2="0.2" y2="0.95"><stop offset="0" stop-color="#f8f8f8"/><stop offset="0.5" stop-color="#e4e4e4"/><stop offset="1" stop-color="#c4c4c4"/></linearGradient><radialGradient id="kd199.6" cx="0.4" cy="0.4" r="0.6"><stop offset="0" stop-color="#6e8a3e"/><stop offset="1" stop-color="#46601f"/></radialGradient></defs><line x1="938.74" y1="184.04" x2="934.50" y2="179.80" stroke="#222" stroke-width="1.2"/><line x1="948.35" y1="177.38" x2="947.70" y2="174.97" stroke="#222" stroke-width="1.2"/><line x1="960.25" y1="177.38" x2="960.90" y2="174.97" stroke="#222" stroke-width="1.2"/><line x1="969.86" y1="184.04" x2="974.10" y2="179.80" stroke="#222" stroke-width="1.2"/><line x1="932.08" y1="193.65" x2="929.67" y2="193.00" stroke="#222" stroke-width="1.2"/><line x1="976.52" y1="193.65" x2="978.93" y2="193.00" stroke="#222" stroke-width="1.2"/><line x1="932.08" y1="205.55" x2="929.67" y2="206.20" stroke="#222" stroke-width="1.2"/><line x1="976.52" y1="205.55" x2="978.93" y2="206.20" stroke="#222" stroke-width="1.2"/><line x1="938.74" y1="215.16" x2="934.50" y2="219.40" stroke="#222" stroke-width="1.2"/><line x1="969.86" y1="215.16" x2="974.10" y2="219.40" stroke="#222" stroke-width="1.2"/><circle cx="954.3" cy="199.6" r="20.3" fill="url(#kn199.6)"/><circle cx="957.6" cy="187.7" r="5" fill="url(#kd199.6)"/></svg>
<svg class="a" style="left:914px;top:246px" width="80" height="80" viewBox="914 246 80 80"><defs><linearGradient id="kn286" x1="0.85" y1="0.1" x2="0.2" y2="0.95"><stop offset="0" stop-color="#f8f8f8"/><stop offset="0.5" stop-color="#e4e4e4"/><stop offset="1" stop-color="#c4c4c4"/></linearGradient><radialGradient id="kd286" cx="0.4" cy="0.4" r="0.6"><stop offset="0" stop-color="#6e8a3e"/><stop offset="1" stop-color="#46601f"/></radialGradient></defs><line x1="938.44" y1="270.44" x2="934.20" y2="266.20" stroke="#222" stroke-width="1.2"/><line x1="948.05" y1="263.78" x2="947.40" y2="261.37" stroke="#222" stroke-width="1.2"/><line x1="959.95" y1="263.78" x2="960.60" y2="261.37" stroke="#222" stroke-width="1.2"/><line x1="969.56" y1="270.44" x2="973.80" y2="266.20" stroke="#222" stroke-width="1.2"/><line x1="931.78" y1="280.05" x2="929.37" y2="279.40" stroke="#222" stroke-width="1.2"/><line x1="976.22" y1="280.05" x2="978.63" y2="279.40" stroke="#222" stroke-width="1.2"/><line x1="931.78" y1="291.95" x2="929.37" y2="292.60" stroke="#222" stroke-width="1.2"/><line x1="976.22" y1="291.95" x2="978.63" y2="292.60" stroke="#222" stroke-width="1.2"/><line x1="938.44" y1="301.56" x2="934.20" y2="305.80" stroke="#222" stroke-width="1.2"/><line x1="969.56" y1="301.56" x2="973.80" y2="305.80" stroke="#222" stroke-width="1.2"/><circle cx="954" cy="286" r="20.5" fill="url(#kn286)"/><circle cx="950" cy="274.5" r="5" fill="url(#kd286)"/></svg>
<svg class="a" style="left:907px;top:334.2px" width="80" height="80" viewBox="907 334.2 80 80"><defs><linearGradient id="kn374.2" x1="0.85" y1="0.1" x2="0.2" y2="0.95"><stop offset="0" stop-color="#f8f8f8"/><stop offset="0.5" stop-color="#e4e4e4"/><stop offset="1" stop-color="#c4c4c4"/></linearGradient><radialGradient id="kd374.2" cx="0.4" cy="0.4" r="0.6"><stop offset="0" stop-color="#6e8a3e"/><stop offset="1" stop-color="#46601f"/></radialGradient></defs><line x1="930.38" y1="357.58" x2="925.79" y2="352.99" stroke="#222" stroke-width="1.2"/><line x1="941.12" y1="351.45" x2="939.49" y2="345.16" stroke="#222" stroke-width="1.2"/><line x1="952.88" y1="351.45" x2="954.51" y2="345.16" stroke="#222" stroke-width="1.2"/><line x1="963.62" y1="357.58" x2="968.21" y2="352.99" stroke="#222" stroke-width="1.2"/><line x1="924.53" y1="367.33" x2="918.31" y2="365.43" stroke="#222" stroke-width="1.2"/><line x1="924.53" y1="381.07" x2="918.31" y2="382.97" stroke="#222" stroke-width="1.2"/><line x1="969.47" y1="367.33" x2="975.69" y2="365.43" stroke="#222" stroke-width="1.2"/><line x1="969.47" y1="381.07" x2="975.69" y2="382.97" stroke="#222" stroke-width="1.2"/><line x1="930.38" y1="390.82" x2="925.79" y2="395.41" stroke="#222" stroke-width="1.2"/><line x1="963.62" y1="390.82" x2="968.21" y2="395.41" stroke="#222" stroke-width="1.2"/><line x1="933.41" y1="354.42" x2="931.71" y2="351.95" stroke="#222" stroke-width="1.2"/><line x1="936.90" y1="352.43" x2="935.63" y2="349.71" stroke="#222" stroke-width="1.2"/><line x1="944.66" y1="350.31" x2="944.37" y2="347.33" stroke="#222" stroke-width="1.2"/><line x1="949.34" y1="350.31" x2="949.63" y2="347.33" stroke="#222" stroke-width="1.2"/><line x1="957.10" y1="352.43" x2="958.37" y2="349.71" stroke="#222" stroke-width="1.2"/><line x1="960.59" y1="354.42" x2="962.29" y2="351.95" stroke="#222" stroke-width="1.2"/><line x1="966.78" y1="360.61" x2="969.25" y2="358.91" stroke="#222" stroke-width="1.2"/><line x1="968.68" y1="363.91" x2="971.39" y2="362.62" stroke="#222" stroke-width="1.2"/><line x1="970.85" y1="371.48" x2="973.83" y2="371.14" stroke="#222" stroke-width="1.2"/><line x1="970.92" y1="376.17" x2="973.91" y2="376.41" stroke="#222" stroke-width="1.2"/><line x1="968.98" y1="383.85" x2="971.72" y2="385.05" stroke="#222" stroke-width="1.2"/><line x1="967.15" y1="387.24" x2="969.67" y2="388.87" stroke="#222" stroke-width="1.2"/><line x1="927.22" y1="360.61" x2="924.75" y2="358.91" stroke="#222" stroke-width="1.2"/><line x1="925.32" y1="363.91" x2="922.61" y2="362.62" stroke="#222" stroke-width="1.2"/><line x1="923.15" y1="371.48" x2="920.17" y2="371.14" stroke="#222" stroke-width="1.2"/><line x1="923.08" y1="376.17" x2="920.09" y2="376.41" stroke="#222" stroke-width="1.2"/><line x1="925.02" y1="383.85" x2="922.28" y2="385.05" stroke="#222" stroke-width="1.2"/><line x1="926.85" y1="387.24" x2="924.33" y2="388.87" stroke="#222" stroke-width="1.2"/><circle cx="947" cy="374.2" r="22.3" fill="url(#kn374.2)"/><circle cx="937.5" cy="364.6" r="5" fill="url(#kd374.2)"/></svg>
<div class="kl" style="left:915px;top:174px">1V</div>
<div class="kl" style="left:976px;top:174px">10V</div>
<div class="kl" style="left:893px;top:212px">100mV</div>
<div class="kl" style="left:976px;top:212px">100V</div>
<div class="kl" style="left:915px;top:261px">1V</div>
<div class="kl" style="left:976px;top:261px">10V</div>
<div class="kl" style="left:893px;top:299px">100mV</div>
<div class="kl" style="left:976px;top:299px">100V</div>
<div class="kl" style="left:916.5px;top:333px;font-size:13px">100us</div>
<div class="kl" style="left:955.5px;top:333px;font-size:13px">1ms</div>
<div class="kl" style="left:895.5px;top:344px;font-size:13px">10us</div>
<div class="kl" style="left:970px;top:346px;font-size:13px">10ms</div>
<div class="kl" style="left:895.5px;top:358px;font-size:13px">1us</div>
<div class="kl" style="left:977.5px;top:359.5px;font-size:13px">100ms</div>
<div class="kl" style="left:881.5px;top:372.5px;font-size:13px">100ns</div>
<div class="kl" style="left:977.5px;top:375px;font-size:13px">1s</div>
<div class="kl" style="left:895.5px;top:386px;font-size:13px">10ns</div>
<div class="kl" style="left:970.5px;top:388px;font-size:13px">10s</div>
<div class="lab" style="left:813px;top:426px;background:#f0f0f0;padding-left:1px;padding-right:2px;letter-spacing:-0.25px">Trigger Mode</div>
<div class="lab" style="left:814px;top:451px;letter-spacing:-0.25px">Trigger Source</div>
<div class="lab" style="left:814px;top:476px;letter-spacing:-0.25px">Trigger Style</div>
<div class="lab" style="left:814px;top:504px;letter-spacing:-0.25px">Trigger Level</div>
<div class="lab" style="left:814px;top:537px">Trigger Sensitivity(0-1.0)</div>
<div class="lab" style="left:814px;top:560px">Trigger Front Percent(1-99)</div>
<div class="cmb" style="left:886px;top:422px;width:125px;height:21px;background:#b4b9c1;border-color:#2a6bc0;font-size:11px;line-height:19px;padding-left:3px;padding-top:1px">Auto</div>
<svg class="a" style="left:995px;top:429px" width="10" height="6"><path d="M1 1 L5 5 L9 1" stroke="#444" stroke-width="1" fill="none"/></svg>
<div class="cmb" style="left:886px;top:446px;width:125px;height:21px;background:#b4b9c1;border-color:#2a6bc0;font-size:11px;line-height:19px;padding-left:3px;padding-top:1px">CH2</div>
<svg class="a" style="left:995px;top:453px" width="10" height="6"><path d="M1 1 L5 5 L9 1" stroke="#444" stroke-width="1" fill="none"/></svg>
<div class="cmb" style="left:886px;top:469px;width:125px;height:21px;background:#b4b9c1;border-color:#2a6bc0;font-size:11px;line-height:19px;padding-left:3px;padding-top:1px">Edge</div>
<svg class="a" style="left:995px;top:476px" width="10" height="6"><path d="M1 1 L5 5 L9 1" stroke="#444" stroke-width="1" fill="none"/></svg>
<div class="a" style="left:881px;top:503px;width:84px;height:19px;background:#fff;border:1px solid #9ab4d6"></div>
<div class="a" style="left:908px;top:505px;font-size:11px;line-height:14px;color:#888">0 00<span style="color:#000">3.300</span></div>
<div class="a" style="left:966px;top:503px;width:45px;height:19px;background:#fafafa;border:1px solid #dcdcdc;font-size:11px;line-height:17px;padding-left:3px">V</div>
<svg class="a" style="left:994px;top:509px" width="10" height="6"><path d="M1 1 L5 5 L9 1" stroke="#555" stroke-width="1" fill="none"/></svg>
<div class="a" style="left:960px;top:536px;width:30px;height:21px;background:#fff;border-bottom:1px solid #222;font-size:11px;line-height:20px;padding-left:3px">0.4</div>
<div class="lab" style="left:992px;top:536px">div</div>
<div class="a" style="left:972px;top:559px;width:24px;height:21px;background:#fff;border-bottom:1px solid #222;font-size:11px;line-height:20px;padding-left:5px">50</div>
<div class="lab" style="left:999px;top:559px">%</div>
<div class="btn" style="left:876px;top:583px;width:73px;height:21px;line-height:19px;color:#8a8a8a;border-color:#dcdcdc;background:#f3f3f3">Force</div>
<div class="a" style="left:1px;top:745px;width:1020px;height:20px;background:linear-gradient(#ffffff 0,#ffffff 1px,#dce9fa 1px,#cfe0f7 45%,#bcd3f2 55%,#c8dbf5 100%);border-top:1px solid #5a86c2;border-bottom-left-radius:6px;border-bottom-right-radius:6px"></div>
<div class="a" style="left:6px;top:749px;font-size:10.5px;line-height:14px;color:#1c338e">Ready</div>
<div class="a" style="left:688px;top:747px;width:1px;height:18px;background:#9db8dc;box-shadow:1px 0 0 #fff"></div>
<div class="a" style="left:691px;top:749px;font-size:10.6px;line-height:14px;color:#1c338e">ISDS205A(1.1)(2)Connected</div>
<div class="a" style="left:1003px;top:747px;width:1px;height:18px;background:#9db8dc;box-shadow:1px 0 0 #fff"></div>
<svg class="a" style="left:1008px;top:752px" width="12" height="12" shape-rendering="crispEdges"><g fill="#2a3a5e"><rect x="9" y="1" width="2" height="2"/><rect x="5" y="5" width="2" height="2"/><rect x="9" y="5" width="2" height="2"/><rect x="1" y="9" width="2" height="2"/><rect x="5" y="9" width="2" height="2"/><rect x="9" y="9" width="2" height="2"/></g></svg>
</body></html>
